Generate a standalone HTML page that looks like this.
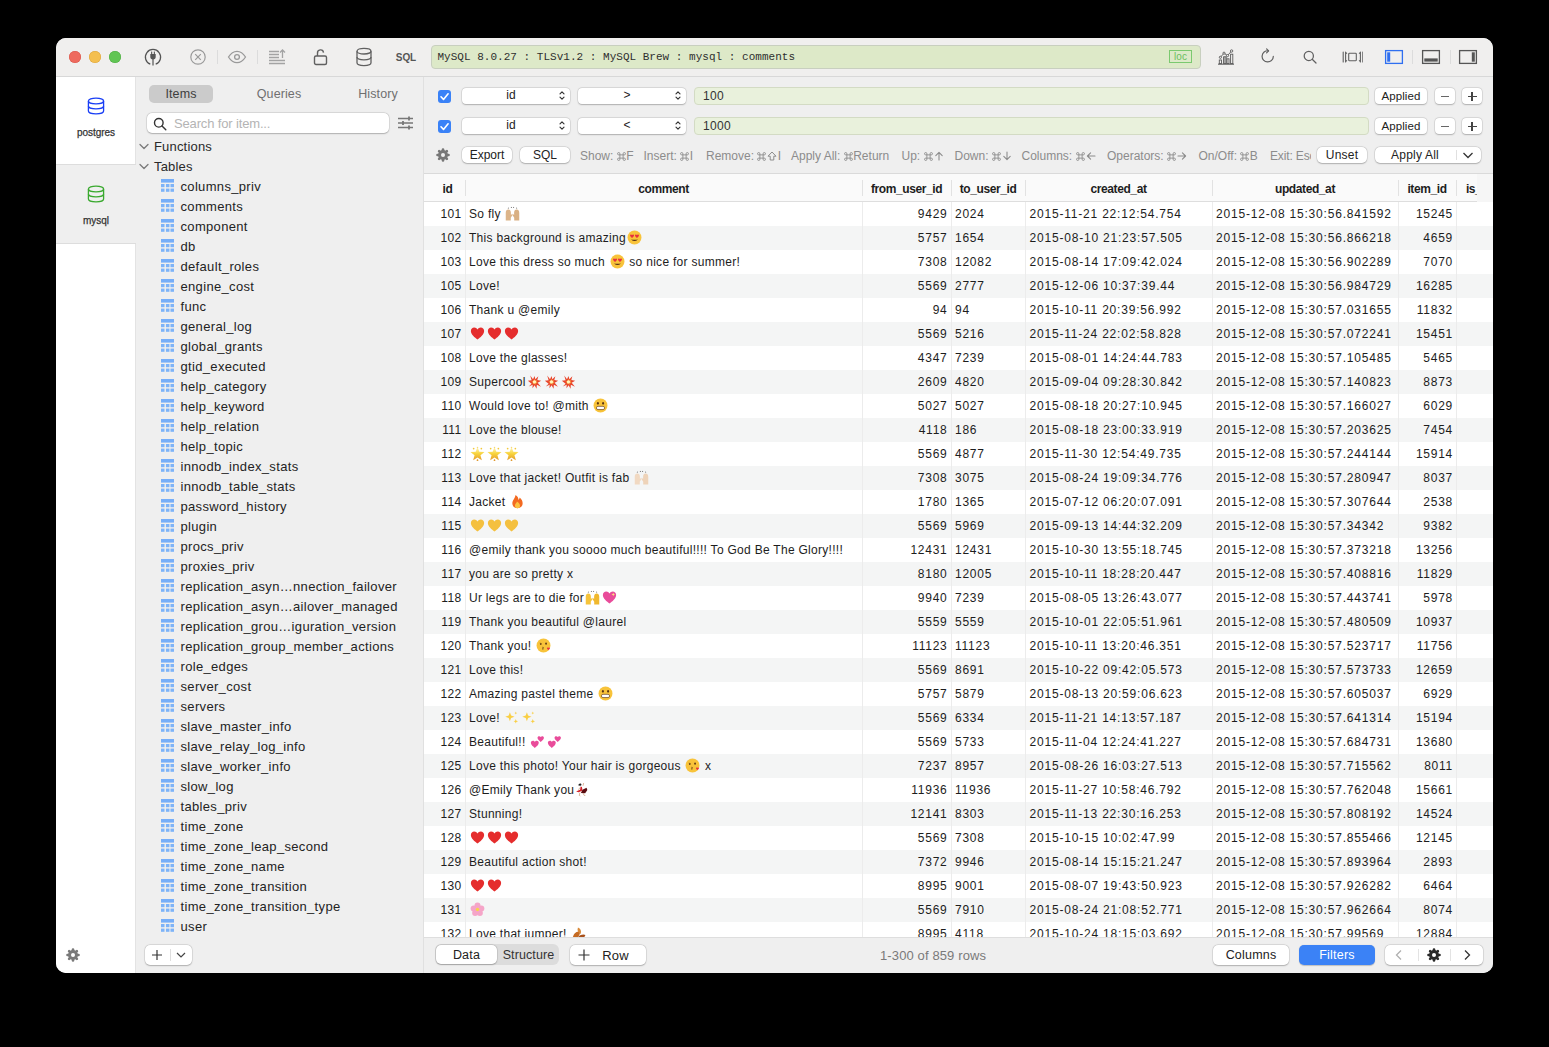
<!DOCTYPE html><html><head><meta charset="utf-8"><style>
html,body{margin:0;padding:0;background:#000;}
body{width:1549px;height:1047px;overflow:hidden;position:relative;font-family:"Liberation Sans",sans-serif;}
#win{position:absolute;left:0;top:0;width:1549px;height:1047px;clip-path:inset(38px 56px 74px 56px round 10px);}
.t{position:absolute;white-space:nowrap;line-height:1;font-family:"Liberation Sans",sans-serif;}
.r{position:absolute;box-sizing:border-box;}
.btn{position:absolute;box-sizing:border-box;background:#fff;border-radius:5px;box-shadow:0 0 0 0.5px rgba(0,0,0,0.12),0 0.5px 1.5px rgba(0,0,0,0.22);}
.row{position:absolute;left:424px;width:1069px;height:24px;}
.cell{position:absolute;white-space:nowrap;line-height:1;font-size:12px;color:#1d1d1d;top:5.9px;}
.em{display:inline-block;position:relative;width:15px;height:0;}
.em svg{position:absolute;left:0;bottom:-3.5px;width:15px;height:15px;}
</style></head><body><div id="win">
<div class="r" style="left:56px;top:38px;width:1437px;height:935px;background:#ffffff;"></div><div class="r" style="left:56px;top:38px;width:1437px;height:38px;background:#f0efee;"></div><div class="r" style="left:56px;top:76px;width:1437px;height:1px;background:#d8d8d8;"></div><div class="r" style="left:69px;top:51px;width:12px;height:12px;border-radius:50%;background:#ee6a5e;box-shadow:inset 0 0 0 0.5px #d9574c"></div><div class="r" style="left:89px;top:51px;width:12px;height:12px;border-radius:50%;background:#f4bf4f;box-shadow:inset 0 0 0 0.5px #dca43d"></div><div class="r" style="left:109px;top:51px;width:12px;height:12px;border-radius:50%;background:#61c554;box-shadow:inset 0 0 0 0.5px #50ab43"></div><div class="r" style="left:56px;top:77px;width:79px;height:896px;background:#ffffff;"></div><div class="r" style="left:135px;top:77px;width:1px;height:896px;background:#e3e3e3;"></div><div class="r" style="left:56px;top:164px;width:80px;height:80px;background:#efefef;border-top:1px solid #dddddd;border-bottom:1px solid #dddddd;"></div><svg class="r" style="left:87px;top:97px;" width="18" height="18" viewBox="0 0 18 18"><g fill="none" stroke="#1a3ff5" stroke-width="1.3"><ellipse cx="9" cy="4" rx="7.6" ry="2.9"/><path d="M1.4 4V14c0 1.6 3.4 2.9 7.6 2.9s7.6-1.3 7.6-2.9V4"/><path d="M1.4 9c0 1.6 3.4 2.9 7.6 2.9s7.6-1.3 7.6-2.9"/></g></svg><div class="t" style="top:127.53px;font-size:10px;color:#333;letter-spacing:-0.05px;left:-304.00px;width:800px;text-align:center;-webkit-text-stroke:0.25px #333;">postgres</div><svg class="r" style="left:87px;top:185px;" width="18" height="18" viewBox="0 0 18 18"><g fill="none" stroke="#3aa92f" stroke-width="1.3"><ellipse cx="9" cy="4" rx="7.6" ry="2.9"/><path d="M1.4 4V14c0 1.6 3.4 2.9 7.6 2.9s7.6-1.3 7.6-2.9V4"/><path d="M1.4 9c0 1.6 3.4 2.9 7.6 2.9s7.6-1.3 7.6-2.9"/></g></svg><div class="t" style="top:215.53px;font-size:10px;color:#333;letter-spacing:-0.05px;left:-304.00px;width:800px;text-align:center;-webkit-text-stroke:0.25px #333;">mysql</div><svg class="r" style="left:65px;top:947px;" width="16" height="16" viewBox="0 0 16 16"><g stroke="#7a7a7a" stroke-width="2.6" stroke-linecap="round"><path d="M8 8L13.50 8.00"/><path d="M8 8L11.89 11.89"/><path d="M8 8L8.00 13.50"/><path d="M8 8L4.11 11.89"/><path d="M8 8L2.50 8.00"/><path d="M8 8L4.11 4.11"/><path d="M8 8L8.00 2.50"/><path d="M8 8L11.89 4.11"/></g><circle cx="8" cy="8" r="4.9" fill="#7a7a7a"/><circle cx="8" cy="8" r="2" fill="#ffffff"/></svg><div class="r" style="left:136px;top:77px;width:287px;height:896px;background:#efefef;"></div><div class="r" style="left:423px;top:77px;width:1px;height:896px;background:#e0e0e0;"></div><div class="r" style="left:149px;top:85px;width:64px;height:18px;background:#cbcbcb;border-radius:5px;"></div><div class="t" style="top:87.62px;font-size:12.5px;color:#3d3d3d;letter-spacing:0.1px;left:-219.00px;width:800px;text-align:center;">Items</div><div class="t" style="top:87.62px;font-size:12.5px;color:#6f6f6f;letter-spacing:0.1px;left:-121.00px;width:800px;text-align:center;">Queries</div><div class="t" style="top:87.62px;font-size:12.5px;color:#6f6f6f;letter-spacing:0.1px;left:-22.00px;width:800px;text-align:center;">History</div><div class="btn" style="left:147px;top:113px;width:242px;height:20px;border-radius:5px"></div><svg class="r" style="left:153px;top:117px;" width="14" height="14" viewBox="0 0 14 14"><g fill="none" stroke="#333" stroke-width="1.4"><circle cx="5.8" cy="5.8" r="4.3"/><path d="M9 9l3.8 3.8" stroke-linecap="round"/></g></svg><div class="t" style="top:117.00px;font-size:13px;color:#b4b4b4;letter-spacing:-0.15px;left:174.00px;">Search for item...</div><svg class="r" style="left:397px;top:115px;" width="17" height="16" viewBox="0 0 17 16"><g stroke="#777" stroke-width="1.5" fill="none"><path d="M1 3.5h15M1 8h15M1 12.5h15"/><path d="M12 1.5v4M6 6v4M12 10.5v4" stroke-width="1.8"/></g></svg><svg class="r" style="left:139px;top:142px;" width="10" height="9" viewBox="0 0 10 9"><path d="M1 2.5l4 4 4-4" fill="none" stroke="#7a7a7a" stroke-width="1.3" stroke-linecap="round" stroke-linejoin="round"/></svg><div class="t" style="top:139.60px;font-size:13px;color:#2a2a2a;letter-spacing:0.18px;left:154.00px;">Functions</div><svg class="r" style="left:139px;top:162px;" width="10" height="9" viewBox="0 0 10 9"><path d="M1 2.5l4 4 4-4" fill="none" stroke="#7a7a7a" stroke-width="1.3" stroke-linecap="round" stroke-linejoin="round"/></svg><div class="t" style="top:159.60px;font-size:13px;color:#2a2a2a;letter-spacing:0.18px;left:154.00px;">Tables</div><svg class="r" style="left:161px;top:179px;" width="13" height="13" viewBox="0 0 13 13"><rect x="0" y="0" width="13" height="3.6" fill="#76aef8"/><rect x="0" y="5" width="3.5" height="3.2" fill="#7db3f8"/><rect x="4.95" y="5" width="3.5" height="3.2" fill="#7db3f8"/><rect x="9.5" y="5" width="3.5" height="3.2" fill="#7db3f8"/><rect x="0" y="9.6" width="3.5" height="3.2" fill="#7db3f8"/><rect x="4.95" y="9.6" width="3.5" height="3.2" fill="#7db3f8"/><rect x="9.5" y="9.6" width="3.5" height="3.2" fill="#7db3f8"/></svg><div class="t" style="top:180.00px;font-size:13px;color:#232323;letter-spacing:0.33px;left:180.50px;">columns_priv</div><svg class="r" style="left:161px;top:199px;" width="13" height="13" viewBox="0 0 13 13"><rect x="0" y="0" width="13" height="3.6" fill="#76aef8"/><rect x="0" y="5" width="3.5" height="3.2" fill="#7db3f8"/><rect x="4.95" y="5" width="3.5" height="3.2" fill="#7db3f8"/><rect x="9.5" y="5" width="3.5" height="3.2" fill="#7db3f8"/><rect x="0" y="9.6" width="3.5" height="3.2" fill="#7db3f8"/><rect x="4.95" y="9.6" width="3.5" height="3.2" fill="#7db3f8"/><rect x="9.5" y="9.6" width="3.5" height="3.2" fill="#7db3f8"/></svg><div class="t" style="top:200.00px;font-size:13px;color:#232323;letter-spacing:0.33px;left:180.50px;">comments</div><svg class="r" style="left:161px;top:219px;" width="13" height="13" viewBox="0 0 13 13"><rect x="0" y="0" width="13" height="3.6" fill="#76aef8"/><rect x="0" y="5" width="3.5" height="3.2" fill="#7db3f8"/><rect x="4.95" y="5" width="3.5" height="3.2" fill="#7db3f8"/><rect x="9.5" y="5" width="3.5" height="3.2" fill="#7db3f8"/><rect x="0" y="9.6" width="3.5" height="3.2" fill="#7db3f8"/><rect x="4.95" y="9.6" width="3.5" height="3.2" fill="#7db3f8"/><rect x="9.5" y="9.6" width="3.5" height="3.2" fill="#7db3f8"/></svg><div class="t" style="top:220.00px;font-size:13px;color:#232323;letter-spacing:0.33px;left:180.50px;">component</div><svg class="r" style="left:161px;top:239px;" width="13" height="13" viewBox="0 0 13 13"><rect x="0" y="0" width="13" height="3.6" fill="#76aef8"/><rect x="0" y="5" width="3.5" height="3.2" fill="#7db3f8"/><rect x="4.95" y="5" width="3.5" height="3.2" fill="#7db3f8"/><rect x="9.5" y="5" width="3.5" height="3.2" fill="#7db3f8"/><rect x="0" y="9.6" width="3.5" height="3.2" fill="#7db3f8"/><rect x="4.95" y="9.6" width="3.5" height="3.2" fill="#7db3f8"/><rect x="9.5" y="9.6" width="3.5" height="3.2" fill="#7db3f8"/></svg><div class="t" style="top:240.00px;font-size:13px;color:#232323;letter-spacing:0.33px;left:180.50px;">db</div><svg class="r" style="left:161px;top:259px;" width="13" height="13" viewBox="0 0 13 13"><rect x="0" y="0" width="13" height="3.6" fill="#76aef8"/><rect x="0" y="5" width="3.5" height="3.2" fill="#7db3f8"/><rect x="4.95" y="5" width="3.5" height="3.2" fill="#7db3f8"/><rect x="9.5" y="5" width="3.5" height="3.2" fill="#7db3f8"/><rect x="0" y="9.6" width="3.5" height="3.2" fill="#7db3f8"/><rect x="4.95" y="9.6" width="3.5" height="3.2" fill="#7db3f8"/><rect x="9.5" y="9.6" width="3.5" height="3.2" fill="#7db3f8"/></svg><div class="t" style="top:260.00px;font-size:13px;color:#232323;letter-spacing:0.33px;left:180.50px;">default_roles</div><svg class="r" style="left:161px;top:279px;" width="13" height="13" viewBox="0 0 13 13"><rect x="0" y="0" width="13" height="3.6" fill="#76aef8"/><rect x="0" y="5" width="3.5" height="3.2" fill="#7db3f8"/><rect x="4.95" y="5" width="3.5" height="3.2" fill="#7db3f8"/><rect x="9.5" y="5" width="3.5" height="3.2" fill="#7db3f8"/><rect x="0" y="9.6" width="3.5" height="3.2" fill="#7db3f8"/><rect x="4.95" y="9.6" width="3.5" height="3.2" fill="#7db3f8"/><rect x="9.5" y="9.6" width="3.5" height="3.2" fill="#7db3f8"/></svg><div class="t" style="top:280.00px;font-size:13px;color:#232323;letter-spacing:0.33px;left:180.50px;">engine_cost</div><svg class="r" style="left:161px;top:299px;" width="13" height="13" viewBox="0 0 13 13"><rect x="0" y="0" width="13" height="3.6" fill="#76aef8"/><rect x="0" y="5" width="3.5" height="3.2" fill="#7db3f8"/><rect x="4.95" y="5" width="3.5" height="3.2" fill="#7db3f8"/><rect x="9.5" y="5" width="3.5" height="3.2" fill="#7db3f8"/><rect x="0" y="9.6" width="3.5" height="3.2" fill="#7db3f8"/><rect x="4.95" y="9.6" width="3.5" height="3.2" fill="#7db3f8"/><rect x="9.5" y="9.6" width="3.5" height="3.2" fill="#7db3f8"/></svg><div class="t" style="top:300.00px;font-size:13px;color:#232323;letter-spacing:0.33px;left:180.50px;">func</div><svg class="r" style="left:161px;top:319px;" width="13" height="13" viewBox="0 0 13 13"><rect x="0" y="0" width="13" height="3.6" fill="#76aef8"/><rect x="0" y="5" width="3.5" height="3.2" fill="#7db3f8"/><rect x="4.95" y="5" width="3.5" height="3.2" fill="#7db3f8"/><rect x="9.5" y="5" width="3.5" height="3.2" fill="#7db3f8"/><rect x="0" y="9.6" width="3.5" height="3.2" fill="#7db3f8"/><rect x="4.95" y="9.6" width="3.5" height="3.2" fill="#7db3f8"/><rect x="9.5" y="9.6" width="3.5" height="3.2" fill="#7db3f8"/></svg><div class="t" style="top:320.00px;font-size:13px;color:#232323;letter-spacing:0.33px;left:180.50px;">general_log</div><svg class="r" style="left:161px;top:339px;" width="13" height="13" viewBox="0 0 13 13"><rect x="0" y="0" width="13" height="3.6" fill="#76aef8"/><rect x="0" y="5" width="3.5" height="3.2" fill="#7db3f8"/><rect x="4.95" y="5" width="3.5" height="3.2" fill="#7db3f8"/><rect x="9.5" y="5" width="3.5" height="3.2" fill="#7db3f8"/><rect x="0" y="9.6" width="3.5" height="3.2" fill="#7db3f8"/><rect x="4.95" y="9.6" width="3.5" height="3.2" fill="#7db3f8"/><rect x="9.5" y="9.6" width="3.5" height="3.2" fill="#7db3f8"/></svg><div class="t" style="top:340.00px;font-size:13px;color:#232323;letter-spacing:0.33px;left:180.50px;">global_grants</div><svg class="r" style="left:161px;top:359px;" width="13" height="13" viewBox="0 0 13 13"><rect x="0" y="0" width="13" height="3.6" fill="#76aef8"/><rect x="0" y="5" width="3.5" height="3.2" fill="#7db3f8"/><rect x="4.95" y="5" width="3.5" height="3.2" fill="#7db3f8"/><rect x="9.5" y="5" width="3.5" height="3.2" fill="#7db3f8"/><rect x="0" y="9.6" width="3.5" height="3.2" fill="#7db3f8"/><rect x="4.95" y="9.6" width="3.5" height="3.2" fill="#7db3f8"/><rect x="9.5" y="9.6" width="3.5" height="3.2" fill="#7db3f8"/></svg><div class="t" style="top:360.00px;font-size:13px;color:#232323;letter-spacing:0.33px;left:180.50px;">gtid_executed</div><svg class="r" style="left:161px;top:379px;" width="13" height="13" viewBox="0 0 13 13"><rect x="0" y="0" width="13" height="3.6" fill="#76aef8"/><rect x="0" y="5" width="3.5" height="3.2" fill="#7db3f8"/><rect x="4.95" y="5" width="3.5" height="3.2" fill="#7db3f8"/><rect x="9.5" y="5" width="3.5" height="3.2" fill="#7db3f8"/><rect x="0" y="9.6" width="3.5" height="3.2" fill="#7db3f8"/><rect x="4.95" y="9.6" width="3.5" height="3.2" fill="#7db3f8"/><rect x="9.5" y="9.6" width="3.5" height="3.2" fill="#7db3f8"/></svg><div class="t" style="top:380.00px;font-size:13px;color:#232323;letter-spacing:0.33px;left:180.50px;">help_category</div><svg class="r" style="left:161px;top:399px;" width="13" height="13" viewBox="0 0 13 13"><rect x="0" y="0" width="13" height="3.6" fill="#76aef8"/><rect x="0" y="5" width="3.5" height="3.2" fill="#7db3f8"/><rect x="4.95" y="5" width="3.5" height="3.2" fill="#7db3f8"/><rect x="9.5" y="5" width="3.5" height="3.2" fill="#7db3f8"/><rect x="0" y="9.6" width="3.5" height="3.2" fill="#7db3f8"/><rect x="4.95" y="9.6" width="3.5" height="3.2" fill="#7db3f8"/><rect x="9.5" y="9.6" width="3.5" height="3.2" fill="#7db3f8"/></svg><div class="t" style="top:400.00px;font-size:13px;color:#232323;letter-spacing:0.33px;left:180.50px;">help_keyword</div><svg class="r" style="left:161px;top:419px;" width="13" height="13" viewBox="0 0 13 13"><rect x="0" y="0" width="13" height="3.6" fill="#76aef8"/><rect x="0" y="5" width="3.5" height="3.2" fill="#7db3f8"/><rect x="4.95" y="5" width="3.5" height="3.2" fill="#7db3f8"/><rect x="9.5" y="5" width="3.5" height="3.2" fill="#7db3f8"/><rect x="0" y="9.6" width="3.5" height="3.2" fill="#7db3f8"/><rect x="4.95" y="9.6" width="3.5" height="3.2" fill="#7db3f8"/><rect x="9.5" y="9.6" width="3.5" height="3.2" fill="#7db3f8"/></svg><div class="t" style="top:420.00px;font-size:13px;color:#232323;letter-spacing:0.33px;left:180.50px;">help_relation</div><svg class="r" style="left:161px;top:439px;" width="13" height="13" viewBox="0 0 13 13"><rect x="0" y="0" width="13" height="3.6" fill="#76aef8"/><rect x="0" y="5" width="3.5" height="3.2" fill="#7db3f8"/><rect x="4.95" y="5" width="3.5" height="3.2" fill="#7db3f8"/><rect x="9.5" y="5" width="3.5" height="3.2" fill="#7db3f8"/><rect x="0" y="9.6" width="3.5" height="3.2" fill="#7db3f8"/><rect x="4.95" y="9.6" width="3.5" height="3.2" fill="#7db3f8"/><rect x="9.5" y="9.6" width="3.5" height="3.2" fill="#7db3f8"/></svg><div class="t" style="top:440.00px;font-size:13px;color:#232323;letter-spacing:0.33px;left:180.50px;">help_topic</div><svg class="r" style="left:161px;top:459px;" width="13" height="13" viewBox="0 0 13 13"><rect x="0" y="0" width="13" height="3.6" fill="#76aef8"/><rect x="0" y="5" width="3.5" height="3.2" fill="#7db3f8"/><rect x="4.95" y="5" width="3.5" height="3.2" fill="#7db3f8"/><rect x="9.5" y="5" width="3.5" height="3.2" fill="#7db3f8"/><rect x="0" y="9.6" width="3.5" height="3.2" fill="#7db3f8"/><rect x="4.95" y="9.6" width="3.5" height="3.2" fill="#7db3f8"/><rect x="9.5" y="9.6" width="3.5" height="3.2" fill="#7db3f8"/></svg><div class="t" style="top:460.00px;font-size:13px;color:#232323;letter-spacing:0.33px;left:180.50px;">innodb_index_stats</div><svg class="r" style="left:161px;top:479px;" width="13" height="13" viewBox="0 0 13 13"><rect x="0" y="0" width="13" height="3.6" fill="#76aef8"/><rect x="0" y="5" width="3.5" height="3.2" fill="#7db3f8"/><rect x="4.95" y="5" width="3.5" height="3.2" fill="#7db3f8"/><rect x="9.5" y="5" width="3.5" height="3.2" fill="#7db3f8"/><rect x="0" y="9.6" width="3.5" height="3.2" fill="#7db3f8"/><rect x="4.95" y="9.6" width="3.5" height="3.2" fill="#7db3f8"/><rect x="9.5" y="9.6" width="3.5" height="3.2" fill="#7db3f8"/></svg><div class="t" style="top:480.00px;font-size:13px;color:#232323;letter-spacing:0.33px;left:180.50px;">innodb_table_stats</div><svg class="r" style="left:161px;top:499px;" width="13" height="13" viewBox="0 0 13 13"><rect x="0" y="0" width="13" height="3.6" fill="#76aef8"/><rect x="0" y="5" width="3.5" height="3.2" fill="#7db3f8"/><rect x="4.95" y="5" width="3.5" height="3.2" fill="#7db3f8"/><rect x="9.5" y="5" width="3.5" height="3.2" fill="#7db3f8"/><rect x="0" y="9.6" width="3.5" height="3.2" fill="#7db3f8"/><rect x="4.95" y="9.6" width="3.5" height="3.2" fill="#7db3f8"/><rect x="9.5" y="9.6" width="3.5" height="3.2" fill="#7db3f8"/></svg><div class="t" style="top:500.00px;font-size:13px;color:#232323;letter-spacing:0.33px;left:180.50px;">password_history</div><svg class="r" style="left:161px;top:519px;" width="13" height="13" viewBox="0 0 13 13"><rect x="0" y="0" width="13" height="3.6" fill="#76aef8"/><rect x="0" y="5" width="3.5" height="3.2" fill="#7db3f8"/><rect x="4.95" y="5" width="3.5" height="3.2" fill="#7db3f8"/><rect x="9.5" y="5" width="3.5" height="3.2" fill="#7db3f8"/><rect x="0" y="9.6" width="3.5" height="3.2" fill="#7db3f8"/><rect x="4.95" y="9.6" width="3.5" height="3.2" fill="#7db3f8"/><rect x="9.5" y="9.6" width="3.5" height="3.2" fill="#7db3f8"/></svg><div class="t" style="top:520.00px;font-size:13px;color:#232323;letter-spacing:0.33px;left:180.50px;">plugin</div><svg class="r" style="left:161px;top:539px;" width="13" height="13" viewBox="0 0 13 13"><rect x="0" y="0" width="13" height="3.6" fill="#76aef8"/><rect x="0" y="5" width="3.5" height="3.2" fill="#7db3f8"/><rect x="4.95" y="5" width="3.5" height="3.2" fill="#7db3f8"/><rect x="9.5" y="5" width="3.5" height="3.2" fill="#7db3f8"/><rect x="0" y="9.6" width="3.5" height="3.2" fill="#7db3f8"/><rect x="4.95" y="9.6" width="3.5" height="3.2" fill="#7db3f8"/><rect x="9.5" y="9.6" width="3.5" height="3.2" fill="#7db3f8"/></svg><div class="t" style="top:540.00px;font-size:13px;color:#232323;letter-spacing:0.33px;left:180.50px;">procs_priv</div><svg class="r" style="left:161px;top:559px;" width="13" height="13" viewBox="0 0 13 13"><rect x="0" y="0" width="13" height="3.6" fill="#76aef8"/><rect x="0" y="5" width="3.5" height="3.2" fill="#7db3f8"/><rect x="4.95" y="5" width="3.5" height="3.2" fill="#7db3f8"/><rect x="9.5" y="5" width="3.5" height="3.2" fill="#7db3f8"/><rect x="0" y="9.6" width="3.5" height="3.2" fill="#7db3f8"/><rect x="4.95" y="9.6" width="3.5" height="3.2" fill="#7db3f8"/><rect x="9.5" y="9.6" width="3.5" height="3.2" fill="#7db3f8"/></svg><div class="t" style="top:560.00px;font-size:13px;color:#232323;letter-spacing:0.33px;left:180.50px;">proxies_priv</div><svg class="r" style="left:161px;top:579px;" width="13" height="13" viewBox="0 0 13 13"><rect x="0" y="0" width="13" height="3.6" fill="#76aef8"/><rect x="0" y="5" width="3.5" height="3.2" fill="#7db3f8"/><rect x="4.95" y="5" width="3.5" height="3.2" fill="#7db3f8"/><rect x="9.5" y="5" width="3.5" height="3.2" fill="#7db3f8"/><rect x="0" y="9.6" width="3.5" height="3.2" fill="#7db3f8"/><rect x="4.95" y="9.6" width="3.5" height="3.2" fill="#7db3f8"/><rect x="9.5" y="9.6" width="3.5" height="3.2" fill="#7db3f8"/></svg><div class="t" style="top:580.00px;font-size:13px;color:#232323;letter-spacing:0.33px;left:180.50px;">replication_asyn…nnection_failover</div><svg class="r" style="left:161px;top:599px;" width="13" height="13" viewBox="0 0 13 13"><rect x="0" y="0" width="13" height="3.6" fill="#76aef8"/><rect x="0" y="5" width="3.5" height="3.2" fill="#7db3f8"/><rect x="4.95" y="5" width="3.5" height="3.2" fill="#7db3f8"/><rect x="9.5" y="5" width="3.5" height="3.2" fill="#7db3f8"/><rect x="0" y="9.6" width="3.5" height="3.2" fill="#7db3f8"/><rect x="4.95" y="9.6" width="3.5" height="3.2" fill="#7db3f8"/><rect x="9.5" y="9.6" width="3.5" height="3.2" fill="#7db3f8"/></svg><div class="t" style="top:600.00px;font-size:13px;color:#232323;letter-spacing:0.33px;left:180.50px;">replication_asyn…ailover_managed</div><svg class="r" style="left:161px;top:619px;" width="13" height="13" viewBox="0 0 13 13"><rect x="0" y="0" width="13" height="3.6" fill="#76aef8"/><rect x="0" y="5" width="3.5" height="3.2" fill="#7db3f8"/><rect x="4.95" y="5" width="3.5" height="3.2" fill="#7db3f8"/><rect x="9.5" y="5" width="3.5" height="3.2" fill="#7db3f8"/><rect x="0" y="9.6" width="3.5" height="3.2" fill="#7db3f8"/><rect x="4.95" y="9.6" width="3.5" height="3.2" fill="#7db3f8"/><rect x="9.5" y="9.6" width="3.5" height="3.2" fill="#7db3f8"/></svg><div class="t" style="top:620.00px;font-size:13px;color:#232323;letter-spacing:0.33px;left:180.50px;">replication_grou…iguration_version</div><svg class="r" style="left:161px;top:639px;" width="13" height="13" viewBox="0 0 13 13"><rect x="0" y="0" width="13" height="3.6" fill="#76aef8"/><rect x="0" y="5" width="3.5" height="3.2" fill="#7db3f8"/><rect x="4.95" y="5" width="3.5" height="3.2" fill="#7db3f8"/><rect x="9.5" y="5" width="3.5" height="3.2" fill="#7db3f8"/><rect x="0" y="9.6" width="3.5" height="3.2" fill="#7db3f8"/><rect x="4.95" y="9.6" width="3.5" height="3.2" fill="#7db3f8"/><rect x="9.5" y="9.6" width="3.5" height="3.2" fill="#7db3f8"/></svg><div class="t" style="top:640.00px;font-size:13px;color:#232323;letter-spacing:0.33px;left:180.50px;">replication_group_member_actions</div><svg class="r" style="left:161px;top:659px;" width="13" height="13" viewBox="0 0 13 13"><rect x="0" y="0" width="13" height="3.6" fill="#76aef8"/><rect x="0" y="5" width="3.5" height="3.2" fill="#7db3f8"/><rect x="4.95" y="5" width="3.5" height="3.2" fill="#7db3f8"/><rect x="9.5" y="5" width="3.5" height="3.2" fill="#7db3f8"/><rect x="0" y="9.6" width="3.5" height="3.2" fill="#7db3f8"/><rect x="4.95" y="9.6" width="3.5" height="3.2" fill="#7db3f8"/><rect x="9.5" y="9.6" width="3.5" height="3.2" fill="#7db3f8"/></svg><div class="t" style="top:660.00px;font-size:13px;color:#232323;letter-spacing:0.33px;left:180.50px;">role_edges</div><svg class="r" style="left:161px;top:679px;" width="13" height="13" viewBox="0 0 13 13"><rect x="0" y="0" width="13" height="3.6" fill="#76aef8"/><rect x="0" y="5" width="3.5" height="3.2" fill="#7db3f8"/><rect x="4.95" y="5" width="3.5" height="3.2" fill="#7db3f8"/><rect x="9.5" y="5" width="3.5" height="3.2" fill="#7db3f8"/><rect x="0" y="9.6" width="3.5" height="3.2" fill="#7db3f8"/><rect x="4.95" y="9.6" width="3.5" height="3.2" fill="#7db3f8"/><rect x="9.5" y="9.6" width="3.5" height="3.2" fill="#7db3f8"/></svg><div class="t" style="top:680.00px;font-size:13px;color:#232323;letter-spacing:0.33px;left:180.50px;">server_cost</div><svg class="r" style="left:161px;top:699px;" width="13" height="13" viewBox="0 0 13 13"><rect x="0" y="0" width="13" height="3.6" fill="#76aef8"/><rect x="0" y="5" width="3.5" height="3.2" fill="#7db3f8"/><rect x="4.95" y="5" width="3.5" height="3.2" fill="#7db3f8"/><rect x="9.5" y="5" width="3.5" height="3.2" fill="#7db3f8"/><rect x="0" y="9.6" width="3.5" height="3.2" fill="#7db3f8"/><rect x="4.95" y="9.6" width="3.5" height="3.2" fill="#7db3f8"/><rect x="9.5" y="9.6" width="3.5" height="3.2" fill="#7db3f8"/></svg><div class="t" style="top:700.00px;font-size:13px;color:#232323;letter-spacing:0.33px;left:180.50px;">servers</div><svg class="r" style="left:161px;top:719px;" width="13" height="13" viewBox="0 0 13 13"><rect x="0" y="0" width="13" height="3.6" fill="#76aef8"/><rect x="0" y="5" width="3.5" height="3.2" fill="#7db3f8"/><rect x="4.95" y="5" width="3.5" height="3.2" fill="#7db3f8"/><rect x="9.5" y="5" width="3.5" height="3.2" fill="#7db3f8"/><rect x="0" y="9.6" width="3.5" height="3.2" fill="#7db3f8"/><rect x="4.95" y="9.6" width="3.5" height="3.2" fill="#7db3f8"/><rect x="9.5" y="9.6" width="3.5" height="3.2" fill="#7db3f8"/></svg><div class="t" style="top:720.00px;font-size:13px;color:#232323;letter-spacing:0.33px;left:180.50px;">slave_master_info</div><svg class="r" style="left:161px;top:739px;" width="13" height="13" viewBox="0 0 13 13"><rect x="0" y="0" width="13" height="3.6" fill="#76aef8"/><rect x="0" y="5" width="3.5" height="3.2" fill="#7db3f8"/><rect x="4.95" y="5" width="3.5" height="3.2" fill="#7db3f8"/><rect x="9.5" y="5" width="3.5" height="3.2" fill="#7db3f8"/><rect x="0" y="9.6" width="3.5" height="3.2" fill="#7db3f8"/><rect x="4.95" y="9.6" width="3.5" height="3.2" fill="#7db3f8"/><rect x="9.5" y="9.6" width="3.5" height="3.2" fill="#7db3f8"/></svg><div class="t" style="top:740.00px;font-size:13px;color:#232323;letter-spacing:0.33px;left:180.50px;">slave_relay_log_info</div><svg class="r" style="left:161px;top:759px;" width="13" height="13" viewBox="0 0 13 13"><rect x="0" y="0" width="13" height="3.6" fill="#76aef8"/><rect x="0" y="5" width="3.5" height="3.2" fill="#7db3f8"/><rect x="4.95" y="5" width="3.5" height="3.2" fill="#7db3f8"/><rect x="9.5" y="5" width="3.5" height="3.2" fill="#7db3f8"/><rect x="0" y="9.6" width="3.5" height="3.2" fill="#7db3f8"/><rect x="4.95" y="9.6" width="3.5" height="3.2" fill="#7db3f8"/><rect x="9.5" y="9.6" width="3.5" height="3.2" fill="#7db3f8"/></svg><div class="t" style="top:760.00px;font-size:13px;color:#232323;letter-spacing:0.33px;left:180.50px;">slave_worker_info</div><svg class="r" style="left:161px;top:779px;" width="13" height="13" viewBox="0 0 13 13"><rect x="0" y="0" width="13" height="3.6" fill="#76aef8"/><rect x="0" y="5" width="3.5" height="3.2" fill="#7db3f8"/><rect x="4.95" y="5" width="3.5" height="3.2" fill="#7db3f8"/><rect x="9.5" y="5" width="3.5" height="3.2" fill="#7db3f8"/><rect x="0" y="9.6" width="3.5" height="3.2" fill="#7db3f8"/><rect x="4.95" y="9.6" width="3.5" height="3.2" fill="#7db3f8"/><rect x="9.5" y="9.6" width="3.5" height="3.2" fill="#7db3f8"/></svg><div class="t" style="top:780.00px;font-size:13px;color:#232323;letter-spacing:0.33px;left:180.50px;">slow_log</div><svg class="r" style="left:161px;top:799px;" width="13" height="13" viewBox="0 0 13 13"><rect x="0" y="0" width="13" height="3.6" fill="#76aef8"/><rect x="0" y="5" width="3.5" height="3.2" fill="#7db3f8"/><rect x="4.95" y="5" width="3.5" height="3.2" fill="#7db3f8"/><rect x="9.5" y="5" width="3.5" height="3.2" fill="#7db3f8"/><rect x="0" y="9.6" width="3.5" height="3.2" fill="#7db3f8"/><rect x="4.95" y="9.6" width="3.5" height="3.2" fill="#7db3f8"/><rect x="9.5" y="9.6" width="3.5" height="3.2" fill="#7db3f8"/></svg><div class="t" style="top:800.00px;font-size:13px;color:#232323;letter-spacing:0.33px;left:180.50px;">tables_priv</div><svg class="r" style="left:161px;top:819px;" width="13" height="13" viewBox="0 0 13 13"><rect x="0" y="0" width="13" height="3.6" fill="#76aef8"/><rect x="0" y="5" width="3.5" height="3.2" fill="#7db3f8"/><rect x="4.95" y="5" width="3.5" height="3.2" fill="#7db3f8"/><rect x="9.5" y="5" width="3.5" height="3.2" fill="#7db3f8"/><rect x="0" y="9.6" width="3.5" height="3.2" fill="#7db3f8"/><rect x="4.95" y="9.6" width="3.5" height="3.2" fill="#7db3f8"/><rect x="9.5" y="9.6" width="3.5" height="3.2" fill="#7db3f8"/></svg><div class="t" style="top:820.00px;font-size:13px;color:#232323;letter-spacing:0.33px;left:180.50px;">time_zone</div><svg class="r" style="left:161px;top:839px;" width="13" height="13" viewBox="0 0 13 13"><rect x="0" y="0" width="13" height="3.6" fill="#76aef8"/><rect x="0" y="5" width="3.5" height="3.2" fill="#7db3f8"/><rect x="4.95" y="5" width="3.5" height="3.2" fill="#7db3f8"/><rect x="9.5" y="5" width="3.5" height="3.2" fill="#7db3f8"/><rect x="0" y="9.6" width="3.5" height="3.2" fill="#7db3f8"/><rect x="4.95" y="9.6" width="3.5" height="3.2" fill="#7db3f8"/><rect x="9.5" y="9.6" width="3.5" height="3.2" fill="#7db3f8"/></svg><div class="t" style="top:840.00px;font-size:13px;color:#232323;letter-spacing:0.33px;left:180.50px;">time_zone_leap_second</div><svg class="r" style="left:161px;top:859px;" width="13" height="13" viewBox="0 0 13 13"><rect x="0" y="0" width="13" height="3.6" fill="#76aef8"/><rect x="0" y="5" width="3.5" height="3.2" fill="#7db3f8"/><rect x="4.95" y="5" width="3.5" height="3.2" fill="#7db3f8"/><rect x="9.5" y="5" width="3.5" height="3.2" fill="#7db3f8"/><rect x="0" y="9.6" width="3.5" height="3.2" fill="#7db3f8"/><rect x="4.95" y="9.6" width="3.5" height="3.2" fill="#7db3f8"/><rect x="9.5" y="9.6" width="3.5" height="3.2" fill="#7db3f8"/></svg><div class="t" style="top:860.00px;font-size:13px;color:#232323;letter-spacing:0.33px;left:180.50px;">time_zone_name</div><svg class="r" style="left:161px;top:879px;" width="13" height="13" viewBox="0 0 13 13"><rect x="0" y="0" width="13" height="3.6" fill="#76aef8"/><rect x="0" y="5" width="3.5" height="3.2" fill="#7db3f8"/><rect x="4.95" y="5" width="3.5" height="3.2" fill="#7db3f8"/><rect x="9.5" y="5" width="3.5" height="3.2" fill="#7db3f8"/><rect x="0" y="9.6" width="3.5" height="3.2" fill="#7db3f8"/><rect x="4.95" y="9.6" width="3.5" height="3.2" fill="#7db3f8"/><rect x="9.5" y="9.6" width="3.5" height="3.2" fill="#7db3f8"/></svg><div class="t" style="top:880.00px;font-size:13px;color:#232323;letter-spacing:0.33px;left:180.50px;">time_zone_transition</div><svg class="r" style="left:161px;top:899px;" width="13" height="13" viewBox="0 0 13 13"><rect x="0" y="0" width="13" height="3.6" fill="#76aef8"/><rect x="0" y="5" width="3.5" height="3.2" fill="#7db3f8"/><rect x="4.95" y="5" width="3.5" height="3.2" fill="#7db3f8"/><rect x="9.5" y="5" width="3.5" height="3.2" fill="#7db3f8"/><rect x="0" y="9.6" width="3.5" height="3.2" fill="#7db3f8"/><rect x="4.95" y="9.6" width="3.5" height="3.2" fill="#7db3f8"/><rect x="9.5" y="9.6" width="3.5" height="3.2" fill="#7db3f8"/></svg><div class="t" style="top:900.00px;font-size:13px;color:#232323;letter-spacing:0.33px;left:180.50px;">time_zone_transition_type</div><svg class="r" style="left:161px;top:919px;" width="13" height="13" viewBox="0 0 13 13"><rect x="0" y="0" width="13" height="3.6" fill="#76aef8"/><rect x="0" y="5" width="3.5" height="3.2" fill="#7db3f8"/><rect x="4.95" y="5" width="3.5" height="3.2" fill="#7db3f8"/><rect x="9.5" y="5" width="3.5" height="3.2" fill="#7db3f8"/><rect x="0" y="9.6" width="3.5" height="3.2" fill="#7db3f8"/><rect x="4.95" y="9.6" width="3.5" height="3.2" fill="#7db3f8"/><rect x="9.5" y="9.6" width="3.5" height="3.2" fill="#7db3f8"/></svg><div class="t" style="top:920.00px;font-size:13px;color:#232323;letter-spacing:0.33px;left:180.50px;">user</div><div class="btn" style="left:145px;top:945px;width:47px;height:20px;border-radius:5px"></div><svg class="r" style="left:150px;top:948px;" width="14" height="14" viewBox="0 0 14 14"><path d="M7 2v10M2 7h10" stroke="#333" stroke-width="1.2"/></svg><div class="r" style="left:170px;top:949px;width:1px;height:12px;background:#dedede;"></div><svg class="r" style="left:175px;top:950px;" width="12" height="10" viewBox="0 0 12 10"><path d="M2 3l4 4 4-4" fill="none" stroke="#444" stroke-width="1.2"/></svg><svg class="r" style="left:143px;top:47px;" width="20" height="20" viewBox="0 0 20 20"><g fill="none" stroke="#555" stroke-width="1.25"><path d="M7.3 17.2A7.6 7.6 0 1 1 12.7 17.2"/></g><g fill="#555"><path d="M7.3 7h5.4v2.8a2.7 2.7 0 0 1-5.4 0z"/><rect x="8.1" y="4.6" width="1.1" height="2.8"/><rect x="10.8" y="4.6" width="1.1" height="2.8"/><rect x="9.4" y="11.5" width="1.2" height="7"/></g></svg><svg class="r" style="left:189px;top:48px;" width="18" height="18" viewBox="0 0 18 18"><g fill="none" stroke="#9a9a9a" stroke-width="1.2"><circle cx="9" cy="9" r="7.2"/><path d="M6.2 6.2l5.6 5.6M11.8 6.2l-5.6 5.6"/></g></svg><div class="r" style="left:217px;top:50px;width:1px;height:14px;background:#dcdcdc;"></div><svg class="r" style="left:227px;top:48px;" width="20" height="18" viewBox="0 0 20 18"><g fill="none" stroke="#9a9a9a" stroke-width="1.3"><path d="M1.5 9C4 5 7 3.3 10 3.3S16 5 18.5 9C16 13 13 14.7 10 14.7S4 13 1.5 9Z"/><circle cx="10" cy="9" r="2.4"/></g></svg><div class="r" style="left:257px;top:50px;width:1px;height:14px;background:#dcdcdc;"></div><svg class="r" style="left:268px;top:48px;" width="18" height="18" viewBox="0 0 18 18"><g stroke="#a3a3a3" stroke-width="1.3" fill="none"><path d="M1 3.5h10M1 6.5h10M1 9.5h10M1 12.5h16M1 15.5h16"/><path d="M14.5 10V2M12 4.5l2.5-2.5 2.5 2.5"/></g></svg><svg class="r" style="left:313px;top:48px;" width="16" height="18" viewBox="0 0 16 18"><g fill="none" stroke="#606060" stroke-width="1.4"><rect x="1.5" y="8" width="12" height="8.5" rx="1.5"/><path d="M4.5 8V5.2a3 3 0 0 1 6 -0.6"/></g></svg><svg class="r" style="left:355px;top:47px;" width="18" height="20" viewBox="0 0 18 20"><g fill="none" stroke="#606060" stroke-width="1.3"><ellipse cx="9" cy="4.2" rx="7" ry="2.8"/><path d="M2 4.2v11.6c0 1.6 3.1 2.8 7 2.8s7-1.2 7-2.8V4.2"/><path d="M2 10c0 1.6 3.1 2.8 7 2.8s7-1.2 7-2.8"/></g></svg><div class="t" style="top:52.53px;font-size:10px;color:#555;font-weight:700;letter-spacing:-0.1px;left:6.00px;width:800px;text-align:center;">SQL</div><div class="r" style="left:431px;top:45px;width:770px;height:24px;background:#dde9c8;border:1px solid #c8cfbf;border-radius:4px"></div><div class="t" style="top:52.39px;font-size:11px;color:#2e2e2e;letter-spacing:0.02px;font-family:'Liberation Mono',monospace;left:437.50px;">MySQL 8.0.27 : TLSv1.2 : MySQL Brew : mysql : comments</div><div class="r" style="left:1169px;top:50px;width:23px;height:13px;border:1px solid #7bc96f;"></div><div class="t" style="top:51.53px;font-size:10px;color:#6cbf5f;left:780.50px;width:800px;text-align:center;">loc</div><svg class="r" style="left:1216px;top:47px;" width="20" height="20" viewBox="0 0 20 20"><g fill="none" stroke="#5a5a5a" stroke-width="0.9"><rect x="3.3" y="13" width="2.2" height="3.6"/><rect x="7.6" y="9.8" width="2.6" height="6.8" fill="#aaa"/><rect x="11" y="11.8" width="2" height="4.8"/><rect x="14.6" y="7.2" width="2.2" height="9.4"/><path d="M4.4 10.3L8 6.2 11.5 8.6 15.6 4"/><circle cx="4.4" cy="10.3" r="1.1" fill="#f0efee"/><circle cx="8" cy="6.2" r="1.1" fill="#f0efee"/><circle cx="11.5" cy="8.6" r="1.1" fill="#f0efee"/><circle cx="15.6" cy="4" r="1.2" fill="#f0efee"/></g><rect x="2" y="16.6" width="16" height="1.1" fill="#5a5a5a"/></svg><svg class="r" style="left:1258px;top:47px;" width="20" height="20" viewBox="0 0 20 20"><g fill="none" stroke="#606060" stroke-width="1.2" stroke-linecap="round" stroke-linejoin="round"><path d="M15.3 9.4A5.6 5.6 0 1 1 10.3 3.8"/><path d="M8.6 1.8L10.6 3.8 8.6 5.8"/></g></svg><svg class="r" style="left:1300px;top:47px;" width="20" height="20" viewBox="0 0 20 20"><g fill="none" stroke="#606060" stroke-width="1.25"><circle cx="8.8" cy="8.9" r="4.6"/><path d="M12.2 12.3L16 16" stroke-linecap="round"/></g></svg><svg class="r" style="left:1341px;top:48px;" width="22" height="18" viewBox="0 0 22 18"><g fill="none" stroke="#606060" stroke-width="1.1"><path d="M2.2 4v10M4.6 4v10M19.4 4v10M21.8 4v10" stroke-linecap="round"/><rect x="7.7" y="5.2" width="7.6" height="7.6" rx="0.8"/><path d="M4.8 4.8l1.2 0.8M4.8 13.2l1.2-0.8M19.2 4.8l-1.2 0.8M19.2 13.2l-1.2-0.8"/></g></svg><svg class="r" style="left:1384px;top:47px;" width="20" height="20" viewBox="0 0 20 20"><rect x="1.6" y="3.6" width="16.8" height="12.8" fill="none" stroke="#2f6ff0" stroke-width="1.3"/><rect x="3.2" y="5.3" width="3" height="9.4" fill="#2f6ff0"/></svg><div class="r" style="left:1412px;top:50px;width:1px;height:14px;background:#dcdcdc;"></div><svg class="r" style="left:1421px;top:47px;" width="20" height="20" viewBox="0 0 20 20"><rect x="1.6" y="3.6" width="16.8" height="12.8" fill="none" stroke="#555" stroke-width="1.3"/><rect x="3.3" y="11.4" width="13.4" height="3.2" fill="#555"/></svg><div class="r" style="left:1450px;top:50px;width:1px;height:14px;background:#dcdcdc;"></div><svg class="r" style="left:1458px;top:47px;" width="20" height="20" viewBox="0 0 20 20"><rect x="1.6" y="3.6" width="16.8" height="12.8" fill="none" stroke="#555" stroke-width="1.3"/><rect x="13.8" y="5.3" width="3" height="9.4" fill="#555"/></svg><div class="r" style="left:424px;top:77px;width:1069px;height:96px;background:#efefef;"></div><div class="r" style="left:424px;top:173px;width:1069px;height:1px;background:#dadada;"></div><svg class="r" style="left:438px;top:90px;" width="13" height="13" viewBox="0 0 13 13"><rect x="0" y="0" width="13" height="13" rx="3" fill="#3a82f7"/><path d="M3 6.8l2.5 2.6 4.6-5.6" fill="none" stroke="#fff" stroke-width="1.6" stroke-linecap="round" stroke-linejoin="round"/></svg><div class="btn" style="left:462px;top:88px;width:108px;height:15.5px;border-radius:4px"></div><div class="t" style="top:89.04px;font-size:12px;color:#222;left:111.00px;width:800px;text-align:center;">id</div><svg class="r" style="left:557.5px;top:90.2px;" width="8" height="11" viewBox="0 0 8 11"><path d="M2 3.8L4 1.8 6 3.8M2 7.2L4 9.2 6 7.2" fill="none" stroke="#333" stroke-width="1.15" stroke-linecap="round" stroke-linejoin="round"/></svg><div class="btn" style="left:578px;top:88px;width:108px;height:15.5px;border-radius:4px"></div><div class="t" style="top:89.04px;font-size:12px;color:#222;left:227.00px;width:800px;text-align:center;">&gt;</div><svg class="r" style="left:673.5px;top:90.2px;" width="8" height="11" viewBox="0 0 8 11"><path d="M2 3.8L4 1.8 6 3.8M2 7.2L4 9.2 6 7.2" fill="none" stroke="#333" stroke-width="1.15" stroke-linecap="round" stroke-linejoin="round"/></svg><div class="r" style="left:694px;top:87px;width:675px;height:18px;background:#e9f1dc;border:1px solid #d3dbc4;border-radius:4px"></div><div class="t" style="top:89.84px;font-size:12px;color:#333;letter-spacing:0.3px;left:703.00px;">100</div><div class="btn" style="left:1375px;top:88px;width:52px;height:16px;border-radius:4px"></div><div class="t" style="top:90.87px;font-size:11.5px;color:#222;letter-spacing:0.1px;left:1001.00px;width:800px;text-align:center;">Applied</div><div class="btn" style="left:1435px;top:88px;width:20px;height:16px;border-radius:4px"></div><div class="r" style="left:1441px;top:96px;width:8px;height:1.2px;background:#666;"></div><div class="btn" style="left:1462px;top:88px;width:20px;height:16px;border-radius:4px"></div><div class="r" style="left:1467.5px;top:95.5px;width:9px;height:1.2px;background:#444;"></div><div class="r" style="left:1471.4px;top:91.6px;width:1.2px;height:9px;background:#444;"></div><svg class="r" style="left:438px;top:120px;" width="13" height="13" viewBox="0 0 13 13"><rect x="0" y="0" width="13" height="13" rx="3" fill="#3a82f7"/><path d="M3 6.8l2.5 2.6 4.6-5.6" fill="none" stroke="#fff" stroke-width="1.6" stroke-linecap="round" stroke-linejoin="round"/></svg><div class="btn" style="left:462px;top:118px;width:108px;height:15.5px;border-radius:4px"></div><div class="t" style="top:119.04px;font-size:12px;color:#222;left:111.00px;width:800px;text-align:center;">id</div><svg class="r" style="left:557.5px;top:120.2px;" width="8" height="11" viewBox="0 0 8 11"><path d="M2 3.8L4 1.8 6 3.8M2 7.2L4 9.2 6 7.2" fill="none" stroke="#333" stroke-width="1.15" stroke-linecap="round" stroke-linejoin="round"/></svg><div class="btn" style="left:578px;top:118px;width:108px;height:15.5px;border-radius:4px"></div><div class="t" style="top:119.04px;font-size:12px;color:#222;left:227.00px;width:800px;text-align:center;">&lt;</div><svg class="r" style="left:673.5px;top:120.2px;" width="8" height="11" viewBox="0 0 8 11"><path d="M2 3.8L4 1.8 6 3.8M2 7.2L4 9.2 6 7.2" fill="none" stroke="#333" stroke-width="1.15" stroke-linecap="round" stroke-linejoin="round"/></svg><div class="r" style="left:694px;top:117px;width:675px;height:18px;background:#e9f1dc;border:1px solid #d3dbc4;border-radius:4px"></div><div class="t" style="top:119.84px;font-size:12px;color:#333;letter-spacing:0.3px;left:703.00px;">1000</div><div class="btn" style="left:1375px;top:118px;width:52px;height:16px;border-radius:4px"></div><div class="t" style="top:120.87px;font-size:11.5px;color:#222;letter-spacing:0.1px;left:1001.00px;width:800px;text-align:center;">Applied</div><div class="btn" style="left:1435px;top:118px;width:20px;height:16px;border-radius:4px"></div><div class="r" style="left:1441px;top:126px;width:8px;height:1.2px;background:#666;"></div><div class="btn" style="left:1462px;top:118px;width:20px;height:16px;border-radius:4px"></div><div class="r" style="left:1467.5px;top:125.5px;width:9px;height:1.2px;background:#444;"></div><div class="r" style="left:1471.4px;top:121.6px;width:1.2px;height:9px;background:#444;"></div><svg class="r" style="left:435px;top:146.5px;" width="16" height="16" viewBox="0 0 16 16"><g stroke="#777777" stroke-width="2.6" stroke-linecap="round"><path d="M8 8L13.50 8.00"/><path d="M8 8L11.89 11.89"/><path d="M8 8L8.00 13.50"/><path d="M8 8L4.11 11.89"/><path d="M8 8L2.50 8.00"/><path d="M8 8L4.11 4.11"/><path d="M8 8L8.00 2.50"/><path d="M8 8L11.89 4.11"/></g><circle cx="8" cy="8" r="4.9" fill="#777777"/><circle cx="8" cy="8" r="2" fill="#efefef"/></svg><div class="btn" style="left:462px;top:147px;width:50px;height:16px;border-radius:5px"></div><div class="t" style="top:149.34px;font-size:12px;color:#222;left:87.00px;width:800px;text-align:center;">Export</div><div class="btn" style="left:520px;top:147px;width:50px;height:16px;border-radius:5px"></div><div class="t" style="top:149.34px;font-size:12px;color:#222;left:145.00px;width:800px;text-align:center;">SQL</div><div class="t" style="top:150.44px;font-size:12px;color:#8c8c8c;left:580.00px;">Show: <svg width="9" height="9" viewBox="0 0 10 10" style="vertical-align:-0.5px;margin:0 0.5px 0 0"><path d="M3.2 3.2V1.9A1.3 1.3 0 1 0 1.9 3.2H8.1A1.3 1.3 0 1 0 6.8 1.9V8.1A1.3 1.3 0 1 0 8.1 6.8H1.9A1.3 1.3 0 1 0 3.2 8.1Z" fill="none" stroke="currentColor" stroke-width="1"/></svg>F</div><div class="t" style="top:150.44px;font-size:12px;color:#8c8c8c;left:643.50px;">Insert: <svg width="9" height="9" viewBox="0 0 10 10" style="vertical-align:-0.5px;margin:0 0.5px 0 0"><path d="M3.2 3.2V1.9A1.3 1.3 0 1 0 1.9 3.2H8.1A1.3 1.3 0 1 0 6.8 1.9V8.1A1.3 1.3 0 1 0 8.1 6.8H1.9A1.3 1.3 0 1 0 3.2 8.1Z" fill="none" stroke="currentColor" stroke-width="1"/></svg>I</div><div class="t" style="top:150.44px;font-size:12px;color:#8c8c8c;left:706.00px;">Remove: <svg width="9" height="9" viewBox="0 0 10 10" style="vertical-align:-0.5px;margin:0 0.5px 0 0"><path d="M3.2 3.2V1.9A1.3 1.3 0 1 0 1.9 3.2H8.1A1.3 1.3 0 1 0 6.8 1.9V8.1A1.3 1.3 0 1 0 8.1 6.8H1.9A1.3 1.3 0 1 0 3.2 8.1Z" fill="none" stroke="currentColor" stroke-width="1"/></svg><svg width="10" height="10" viewBox="0 0 10 10" style="vertical-align:-0.5px;margin:0 0.5px"><path d="M5 1L9 5.2H6.8V9H3.2V5.2H1Z" fill="none" stroke="currentColor" stroke-width="1" stroke-linejoin="round"/></svg>I</div><div class="t" style="top:150.44px;font-size:12px;color:#8c8c8c;left:791.00px;">Apply All: <svg width="9" height="9" viewBox="0 0 10 10" style="vertical-align:-0.5px;margin:0 0.5px 0 0"><path d="M3.2 3.2V1.9A1.3 1.3 0 1 0 1.9 3.2H8.1A1.3 1.3 0 1 0 6.8 1.9V8.1A1.3 1.3 0 1 0 8.1 6.8H1.9A1.3 1.3 0 1 0 3.2 8.1Z" fill="none" stroke="currentColor" stroke-width="1"/></svg>Return</div><div class="t" style="top:150.44px;font-size:12px;color:#8c8c8c;left:901.50px;">Up: <svg width="9" height="9" viewBox="0 0 10 10" style="vertical-align:-0.5px;margin:0 0.5px 0 0"><path d="M3.2 3.2V1.9A1.3 1.3 0 1 0 1.9 3.2H8.1A1.3 1.3 0 1 0 6.8 1.9V8.1A1.3 1.3 0 1 0 8.1 6.8H1.9A1.3 1.3 0 1 0 3.2 8.1Z" fill="none" stroke="currentColor" stroke-width="1"/></svg><svg width="10" height="10" viewBox="0 0 10 10" style="vertical-align:-0.5px;margin-left:0.5px"><g transform="rotate(0 5 5)" fill="none" stroke="currentColor" stroke-width="1.1" stroke-linecap="round" stroke-linejoin="round"><path d="M5 9V1.5M1.8 4.6L5 1.4 8.2 4.6"/></g></svg></div><div class="t" style="top:150.44px;font-size:12px;color:#8c8c8c;left:954.50px;">Down: <svg width="9" height="9" viewBox="0 0 10 10" style="vertical-align:-0.5px;margin:0 0.5px 0 0"><path d="M3.2 3.2V1.9A1.3 1.3 0 1 0 1.9 3.2H8.1A1.3 1.3 0 1 0 6.8 1.9V8.1A1.3 1.3 0 1 0 8.1 6.8H1.9A1.3 1.3 0 1 0 3.2 8.1Z" fill="none" stroke="currentColor" stroke-width="1"/></svg><svg width="10" height="10" viewBox="0 0 10 10" style="vertical-align:-0.5px;margin-left:0.5px"><g transform="rotate(180 5 5)" fill="none" stroke="currentColor" stroke-width="1.1" stroke-linecap="round" stroke-linejoin="round"><path d="M5 9V1.5M1.8 4.6L5 1.4 8.2 4.6"/></g></svg></div><div class="t" style="top:150.44px;font-size:12px;color:#8c8c8c;left:1021.50px;">Columns: <svg width="9" height="9" viewBox="0 0 10 10" style="vertical-align:-0.5px;margin:0 0.5px 0 0"><path d="M3.2 3.2V1.9A1.3 1.3 0 1 0 1.9 3.2H8.1A1.3 1.3 0 1 0 6.8 1.9V8.1A1.3 1.3 0 1 0 8.1 6.8H1.9A1.3 1.3 0 1 0 3.2 8.1Z" fill="none" stroke="currentColor" stroke-width="1"/></svg><svg width="10" height="10" viewBox="0 0 10 10" style="vertical-align:-0.5px;margin-left:0.5px"><g transform="rotate(270 5 5)" fill="none" stroke="currentColor" stroke-width="1.1" stroke-linecap="round" stroke-linejoin="round"><path d="M5 9V1.5M1.8 4.6L5 1.4 8.2 4.6"/></g></svg></div><div class="t" style="top:150.44px;font-size:12px;color:#8c8c8c;left:1107.00px;">Operators: <svg width="9" height="9" viewBox="0 0 10 10" style="vertical-align:-0.5px;margin:0 0.5px 0 0"><path d="M3.2 3.2V1.9A1.3 1.3 0 1 0 1.9 3.2H8.1A1.3 1.3 0 1 0 6.8 1.9V8.1A1.3 1.3 0 1 0 8.1 6.8H1.9A1.3 1.3 0 1 0 3.2 8.1Z" fill="none" stroke="currentColor" stroke-width="1"/></svg><svg width="10" height="10" viewBox="0 0 10 10" style="vertical-align:-0.5px;margin-left:0.5px"><g transform="rotate(90 5 5)" fill="none" stroke="currentColor" stroke-width="1.1" stroke-linecap="round" stroke-linejoin="round"><path d="M5 9V1.5M1.8 4.6L5 1.4 8.2 4.6"/></g></svg></div><div class="t" style="top:150.44px;font-size:12px;color:#8c8c8c;left:1198.50px;">On/Off: <svg width="9" height="9" viewBox="0 0 10 10" style="vertical-align:-0.5px;margin:0 0.5px 0 0"><path d="M3.2 3.2V1.9A1.3 1.3 0 1 0 1.9 3.2H8.1A1.3 1.3 0 1 0 6.8 1.9V8.1A1.3 1.3 0 1 0 8.1 6.8H1.9A1.3 1.3 0 1 0 3.2 8.1Z" fill="none" stroke="currentColor" stroke-width="1"/></svg>B</div><div class="t" style="left:1270px;top:150.4px;width:41px;overflow:hidden;font-size:12px;color:#8c8c8c;letter-spacing:-0.15px">Exit: Esc</div><div class="btn" style="left:1317px;top:147px;width:50px;height:16px;border-radius:5px"></div><div class="t" style="top:149.34px;font-size:12px;color:#222;letter-spacing:0.2px;left:942.00px;width:800px;text-align:center;">Unset</div><div class="btn" style="left:1375px;top:147px;width:106px;height:16px;border-radius:5px"></div><div class="t" style="top:149.34px;font-size:12px;color:#222;letter-spacing:0.2px;left:1015.00px;width:800px;text-align:center;">Apply All</div><div class="r" style="left:1455.5px;top:150px;width:1px;height:10px;background:#e0e0e0;"></div><svg class="r" style="left:1462px;top:151px;" width="12" height="9" viewBox="0 0 12 9"><path d="M1.5 2l4.5 4.5 4.5-4.5" fill="none" stroke="#333" stroke-width="1.3"/></svg><svg width="0" height="0" style="position:absolute"><defs><linearGradient id="gstar" x1="0" y1="0" x2="0" y2="1"><stop offset="0" stop-color="#fff8c8"/><stop offset="0.5" stop-color="#f8d43c"/><stop offset="1" stop-color="#e49a2c"/></linearGradient></defs></svg><div class="r" style="left:424px;top:174px;width:1069px;height:28px;background:#ffffff;"></div><div class="r" style="left:1477px;top:174px;width:16px;height:28px;background:#f6f6f6;"></div><div class="r" style="left:424px;top:174px;width:1053px;height:27px;background:#fafafa;"></div><div class="r" style="left:424px;top:201px;width:1053px;height:1px;background:#dedede;"></div><div class="r" style="left:465px;top:180px;width:1px;height:16px;background:#e2e2e2;"></div><div class="r" style="left:862px;top:180px;width:1px;height:16px;background:#e2e2e2;"></div><div class="r" style="left:951px;top:180px;width:1px;height:16px;background:#e2e2e2;"></div><div class="r" style="left:1025px;top:180px;width:1px;height:16px;background:#e2e2e2;"></div><div class="r" style="left:1212px;top:180px;width:1px;height:16px;background:#e2e2e2;"></div><div class="r" style="left:1398px;top:180px;width:1px;height:16px;background:#e2e2e2;"></div><div class="r" style="left:1456px;top:180px;width:1px;height:16px;background:#e2e2e2;"></div><div class="t" style="top:182.64px;font-size:12px;color:#1e1e1e;font-weight:700;letter-spacing:-0.4px;left:47.50px;width:800px;text-align:center;">id</div><div class="t" style="top:182.64px;font-size:12px;color:#1e1e1e;font-weight:700;letter-spacing:-0.4px;left:263.50px;width:800px;text-align:center;">comment</div><div class="t" style="top:182.64px;font-size:12px;color:#1e1e1e;font-weight:700;letter-spacing:-0.4px;left:506.50px;width:800px;text-align:center;">from_user_id</div><div class="t" style="top:182.64px;font-size:12px;color:#1e1e1e;font-weight:700;letter-spacing:-0.4px;left:588.00px;width:800px;text-align:center;">to_user_id</div><div class="t" style="top:182.64px;font-size:12px;color:#1e1e1e;font-weight:700;letter-spacing:-0.4px;left:718.50px;width:800px;text-align:center;">created_at</div><div class="t" style="top:182.64px;font-size:12px;color:#1e1e1e;font-weight:700;letter-spacing:-0.4px;left:905.00px;width:800px;text-align:center;">updated_at</div><div class="t" style="top:182.64px;font-size:12px;color:#1e1e1e;font-weight:700;letter-spacing:-0.4px;left:1027.00px;width:800px;text-align:center;">item_id</div><div class="t" style="left:1466px;top:182.6px;width:11px;overflow:hidden;font-size:12px;font-weight:700;color:#1e1e1e;letter-spacing:-0.5px">is_active</div><div class="r" style="left:424px;top:202px;width:1069px;height:735px;overflow:hidden"><div class="row" style="left:0;top:0px;background:#ffffff"><div class="cell" style="right:1031.5px;letter-spacing:0.35px">101</div><div class="cell" style="left:45px;letter-spacing:0.29px">So fly <span class="em" style="margin-left:1px;margin-right:1px"><svg viewBox="0 0 14 14"><g fill="#dcb58a"><path d="M0.7 13.6V6.3C0.7 4.2 1.8 3.2 3.1 3.2S5.5 4.2 5.5 6.3V8.4L6.8 7.3 6.9 8.6 5.4 11V13.6Z"/></g><g fill="#d9b083" transform="translate(14 0) scale(-1 1)"><path d="M0.7 13.6V6.3C0.7 4.2 1.8 3.2 3.1 3.2S5.5 4.2 5.5 6.3V8.4L6.8 7.3 6.9 8.6 5.4 11V13.6Z"/></g><g fill="#444"><path d="M2.6 2.3l0.5-1.1 0.5 1.1z"/><path d="M5.4 1.9l0.5-1.1 0.5 1.1z"/><path d="M7.6 1.9l0.5-1.1 0.5 1.1z"/><path d="M10.4 2.3l0.5-1.1 0.5 1.1z"/></g></svg></span></div><div class="cell" style="right:545.5px;letter-spacing:0.75px">9429</div><div class="cell" style="left:531px;letter-spacing:0.75px">2024</div><div class="cell" style="left:605.5px;letter-spacing:0.8px">2015-11-21 22:12:54.754</div><div class="cell" style="left:792px;letter-spacing:0.8px">2015-12-08 15:30:56.841592</div><div class="cell" style="right:40px;letter-spacing:0.75px">15245</div></div><div class="row" style="left:0;top:24px;background:#f4f5f5"><div class="cell" style="right:1031.5px;letter-spacing:0.35px">102</div><div class="cell" style="left:45px;letter-spacing:0.29px">This background is amazing<span class="em" style="margin-left:1px;margin-right:1px"><svg viewBox="0 0 14 14"><circle cx="7" cy="7" r="6.5" fill="#f8c33a"/><path d="M2.8 5.2c0-1.2 1.6-1.4 1.9-0.4 0.3-1 1.9-0.8 1.9 0.4 0 1-1.9 2.2-1.9 2.2s-1.9-1.2-1.9-2.2zM7.4 5.2c0-1.2 1.6-1.4 1.9-0.4 0.3-1 1.9-0.8 1.9 0.4 0 1-1.9 2.2-1.9 2.2s-1.9-1.2-1.9-2.2z" fill="#e8303e"/><path d="M3.8 8.8Q7 11.8 10.2 8.8Q7 9.6 3.8 8.8z" fill="#5a3312"/></svg></span></div><div class="cell" style="right:545.5px;letter-spacing:0.75px">5757</div><div class="cell" style="left:531px;letter-spacing:0.75px">1654</div><div class="cell" style="left:605.5px;letter-spacing:0.8px">2015-08-10 21:23:57.505</div><div class="cell" style="left:792px;letter-spacing:0.8px">2015-12-08 15:30:56.866218</div><div class="cell" style="right:40px;letter-spacing:0.75px">4659</div></div><div class="row" style="left:0;top:48px;background:#ffffff"><div class="cell" style="right:1031.5px;letter-spacing:0.35px">103</div><div class="cell" style="left:45px;letter-spacing:0.29px">Love this dress so much <span class="em" style="margin-left:1px;margin-right:1px"><svg viewBox="0 0 14 14"><circle cx="7" cy="7" r="6.5" fill="#f8c33a"/><path d="M2.8 5.2c0-1.2 1.6-1.4 1.9-0.4 0.3-1 1.9-0.8 1.9 0.4 0 1-1.9 2.2-1.9 2.2s-1.9-1.2-1.9-2.2zM7.4 5.2c0-1.2 1.6-1.4 1.9-0.4 0.3-1 1.9-0.8 1.9 0.4 0 1-1.9 2.2-1.9 2.2s-1.9-1.2-1.9-2.2z" fill="#e8303e"/><path d="M3.8 8.8Q7 11.8 10.2 8.8Q7 9.6 3.8 8.8z" fill="#5a3312"/></svg></span> so nice for summer!</div><div class="cell" style="right:545.5px;letter-spacing:0.75px">7308</div><div class="cell" style="left:531px;letter-spacing:0.75px">12082</div><div class="cell" style="left:605.5px;letter-spacing:0.8px">2015-08-14 17:09:42.024</div><div class="cell" style="left:792px;letter-spacing:0.8px">2015-12-08 15:30:56.902289</div><div class="cell" style="right:40px;letter-spacing:0.75px">7070</div></div><div class="row" style="left:0;top:72px;background:#f4f5f5"><div class="cell" style="right:1031.5px;letter-spacing:0.35px">105</div><div class="cell" style="left:45px;letter-spacing:0.29px">Love!</div><div class="cell" style="right:545.5px;letter-spacing:0.75px">5569</div><div class="cell" style="left:531px;letter-spacing:0.75px">2777</div><div class="cell" style="left:605.5px;letter-spacing:0.8px">2015-12-06 10:37:39.44</div><div class="cell" style="left:792px;letter-spacing:0.8px">2015-12-08 15:30:56.984729</div><div class="cell" style="right:40px;letter-spacing:0.75px">16285</div></div><div class="row" style="left:0;top:96px;background:#ffffff"><div class="cell" style="right:1031.5px;letter-spacing:0.35px">106</div><div class="cell" style="left:45px;letter-spacing:0.29px">Thank u @emily</div><div class="cell" style="right:545.5px;letter-spacing:0.75px">94</div><div class="cell" style="left:531px;letter-spacing:0.75px">94</div><div class="cell" style="left:605.5px;letter-spacing:0.8px">2015-10-11 20:39:56.992</div><div class="cell" style="left:792px;letter-spacing:0.8px">2015-12-08 15:30:57.031655</div><div class="cell" style="right:40px;letter-spacing:0.75px">11832</div></div><div class="row" style="left:0;top:120px;background:#f4f5f5"><div class="cell" style="right:1031.5px;letter-spacing:0.35px">107</div><div class="cell" style="left:45px;letter-spacing:0.29px"><span class="em" style="margin-left:1px;margin-right:1px"><svg viewBox="0 0 14 14"><path d="M7 12.6C4.5 10.6 0.8 8 0.8 4.6 0.8 2.6 2.3 1.3 3.9 1.3 5.3 1.3 6.4 2.1 7 3.2 7.6 2.1 8.7 1.3 10.1 1.3 11.7 1.3 13.2 2.6 13.2 4.6 13.2 8 9.5 10.6 7 12.6Z" fill="#e52d2d"/></svg></span><span class="em" style="margin-left:1px;margin-right:1px"><svg viewBox="0 0 14 14"><path d="M7 12.6C4.5 10.6 0.8 8 0.8 4.6 0.8 2.6 2.3 1.3 3.9 1.3 5.3 1.3 6.4 2.1 7 3.2 7.6 2.1 8.7 1.3 10.1 1.3 11.7 1.3 13.2 2.6 13.2 4.6 13.2 8 9.5 10.6 7 12.6Z" fill="#e52d2d"/></svg></span><span class="em" style="margin-left:1px;margin-right:1px"><svg viewBox="0 0 14 14"><path d="M7 12.6C4.5 10.6 0.8 8 0.8 4.6 0.8 2.6 2.3 1.3 3.9 1.3 5.3 1.3 6.4 2.1 7 3.2 7.6 2.1 8.7 1.3 10.1 1.3 11.7 1.3 13.2 2.6 13.2 4.6 13.2 8 9.5 10.6 7 12.6Z" fill="#e52d2d"/></svg></span></div><div class="cell" style="right:545.5px;letter-spacing:0.75px">5569</div><div class="cell" style="left:531px;letter-spacing:0.75px">5216</div><div class="cell" style="left:605.5px;letter-spacing:0.8px">2015-11-24 22:02:58.828</div><div class="cell" style="left:792px;letter-spacing:0.8px">2015-12-08 15:30:57.072241</div><div class="cell" style="right:40px;letter-spacing:0.75px">15451</div></div><div class="row" style="left:0;top:144px;background:#ffffff"><div class="cell" style="right:1031.5px;letter-spacing:0.35px">108</div><div class="cell" style="left:45px;letter-spacing:0.29px">Love the glasses!</div><div class="cell" style="right:545.5px;letter-spacing:0.75px">4347</div><div class="cell" style="left:531px;letter-spacing:0.75px">7239</div><div class="cell" style="left:605.5px;letter-spacing:0.8px">2015-08-01 14:24:44.783</div><div class="cell" style="left:792px;letter-spacing:0.8px">2015-12-08 15:30:57.105485</div><div class="cell" style="right:40px;letter-spacing:0.75px">5465</div></div><div class="row" style="left:0;top:168px;background:#f4f5f5"><div class="cell" style="right:1031.5px;letter-spacing:0.35px">109</div><div class="cell" style="left:45px;letter-spacing:0.29px">Supercool<span class="em" style="margin-left:1px;margin-right:1px"><svg viewBox="0 0 14 14"><path d="M3 1.5l2.6 3.4 1.4-3.1 0.8 3 2.8-2.6-1 3.5 3.6 0.7-3.2 1.8 3 3.8-3.8-2-0.3 3.8-1.8-3.2-2 2.6 0.2-3.2-3.6 1.6 2.6-2.6L0.8 6.2l3.5-0.4z" fill="#e8452c"/><path d="M7 4.6l0.9 1.6 1.8-0.4-1 1.5 1.3 1.2-1.8 0.1-0.4 1.7-1-1.4-1.5 0.9 0.4-1.7-1.6-0.9 1.8-0.6z" fill="#f9a441"/><circle cx="7" cy="7.3" r="1.5" fill="#fff6c0"/></svg></span><span class="em" style="margin-left:1px;margin-right:1px"><svg viewBox="0 0 14 14"><path d="M3 1.5l2.6 3.4 1.4-3.1 0.8 3 2.8-2.6-1 3.5 3.6 0.7-3.2 1.8 3 3.8-3.8-2-0.3 3.8-1.8-3.2-2 2.6 0.2-3.2-3.6 1.6 2.6-2.6L0.8 6.2l3.5-0.4z" fill="#e8452c"/><path d="M7 4.6l0.9 1.6 1.8-0.4-1 1.5 1.3 1.2-1.8 0.1-0.4 1.7-1-1.4-1.5 0.9 0.4-1.7-1.6-0.9 1.8-0.6z" fill="#f9a441"/><circle cx="7" cy="7.3" r="1.5" fill="#fff6c0"/></svg></span><span class="em" style="margin-left:1px;margin-right:1px"><svg viewBox="0 0 14 14"><path d="M3 1.5l2.6 3.4 1.4-3.1 0.8 3 2.8-2.6-1 3.5 3.6 0.7-3.2 1.8 3 3.8-3.8-2-0.3 3.8-1.8-3.2-2 2.6 0.2-3.2-3.6 1.6 2.6-2.6L0.8 6.2l3.5-0.4z" fill="#e8452c"/><path d="M7 4.6l0.9 1.6 1.8-0.4-1 1.5 1.3 1.2-1.8 0.1-0.4 1.7-1-1.4-1.5 0.9 0.4-1.7-1.6-0.9 1.8-0.6z" fill="#f9a441"/><circle cx="7" cy="7.3" r="1.5" fill="#fff6c0"/></svg></span></div><div class="cell" style="right:545.5px;letter-spacing:0.75px">2609</div><div class="cell" style="left:531px;letter-spacing:0.75px">4820</div><div class="cell" style="left:605.5px;letter-spacing:0.8px">2015-09-04 09:28:30.842</div><div class="cell" style="left:792px;letter-spacing:0.8px">2015-12-08 15:30:57.140823</div><div class="cell" style="right:40px;letter-spacing:0.75px">8873</div></div><div class="row" style="left:0;top:192px;background:#ffffff"><div class="cell" style="right:1031.5px;letter-spacing:0.35px">110</div><div class="cell" style="left:45px;letter-spacing:0.29px">Would love to! @mith <span class="em" style="margin-left:1px;margin-right:1px"><svg viewBox="0 0 14 14"><circle cx="7" cy="7" r="6.5" fill="#f8c33a"/><ellipse cx="4.6" cy="5" rx="0.9" ry="1.2" fill="#5a3312"/><ellipse cx="9.4" cy="5" rx="0.9" ry="1.2" fill="#5a3312"/><rect x="3.2" y="7.8" width="7.6" height="3" rx="1.4" fill="#fff" stroke="#5a3312" stroke-width="0.6"/></svg></span></div><div class="cell" style="right:545.5px;letter-spacing:0.75px">5027</div><div class="cell" style="left:531px;letter-spacing:0.75px">5027</div><div class="cell" style="left:605.5px;letter-spacing:0.8px">2015-08-18 20:27:10.945</div><div class="cell" style="left:792px;letter-spacing:0.8px">2015-12-08 15:30:57.166027</div><div class="cell" style="right:40px;letter-spacing:0.75px">6029</div></div><div class="row" style="left:0;top:216px;background:#f4f5f5"><div class="cell" style="right:1031.5px;letter-spacing:0.35px">111</div><div class="cell" style="left:45px;letter-spacing:0.29px">Love the blouse!</div><div class="cell" style="right:545.5px;letter-spacing:0.75px">4118</div><div class="cell" style="left:531px;letter-spacing:0.75px">186</div><div class="cell" style="left:605.5px;letter-spacing:0.8px">2015-08-18 23:00:33.919</div><div class="cell" style="left:792px;letter-spacing:0.8px">2015-12-08 15:30:57.203625</div><div class="cell" style="right:40px;letter-spacing:0.75px">7454</div></div><div class="row" style="left:0;top:240px;background:#ffffff"><div class="cell" style="right:1031.5px;letter-spacing:0.35px">112</div><div class="cell" style="left:45px;letter-spacing:0.29px"><span class="em" style="margin-left:1px;margin-right:1px"><svg viewBox="0 0 14 14"><path d="M7.00 0.90L8.70 5.45L13.56 5.67L9.76 8.70L11.06 13.38L7.00 10.70L2.94 13.38L4.24 8.70L0.44 5.67L5.30 5.45Z" fill="url(#gstar)"/><circle cx="3.4" cy="2.4" r="0.8" fill="#f2c83a"/><circle cx="10.6" cy="2.4" r="0.8" fill="#f2c83a"/><circle cx="7" cy="1.3" r="0.7" fill="#f5d978"/><path d="M6.5 12.4h1l0.3 1.6h-1.6z" fill="#e09a30"/></svg></span><span class="em" style="margin-left:1px;margin-right:1px"><svg viewBox="0 0 14 14"><path d="M7.00 0.90L8.70 5.45L13.56 5.67L9.76 8.70L11.06 13.38L7.00 10.70L2.94 13.38L4.24 8.70L0.44 5.67L5.30 5.45Z" fill="url(#gstar)"/><circle cx="3.4" cy="2.4" r="0.8" fill="#f2c83a"/><circle cx="10.6" cy="2.4" r="0.8" fill="#f2c83a"/><circle cx="7" cy="1.3" r="0.7" fill="#f5d978"/><path d="M6.5 12.4h1l0.3 1.6h-1.6z" fill="#e09a30"/></svg></span><span class="em" style="margin-left:1px;margin-right:1px"><svg viewBox="0 0 14 14"><path d="M7.00 0.90L8.70 5.45L13.56 5.67L9.76 8.70L11.06 13.38L7.00 10.70L2.94 13.38L4.24 8.70L0.44 5.67L5.30 5.45Z" fill="url(#gstar)"/><circle cx="3.4" cy="2.4" r="0.8" fill="#f2c83a"/><circle cx="10.6" cy="2.4" r="0.8" fill="#f2c83a"/><circle cx="7" cy="1.3" r="0.7" fill="#f5d978"/><path d="M6.5 12.4h1l0.3 1.6h-1.6z" fill="#e09a30"/></svg></span></div><div class="cell" style="right:545.5px;letter-spacing:0.75px">5569</div><div class="cell" style="left:531px;letter-spacing:0.75px">4877</div><div class="cell" style="left:605.5px;letter-spacing:0.8px">2015-11-30 12:54:49.735</div><div class="cell" style="left:792px;letter-spacing:0.8px">2015-12-08 15:30:57.244144</div><div class="cell" style="right:40px;letter-spacing:0.75px">15914</div></div><div class="row" style="left:0;top:264px;background:#f4f5f5"><div class="cell" style="right:1031.5px;letter-spacing:0.35px">113</div><div class="cell" style="left:45px;letter-spacing:0.29px">Love that jacket! Outfit is fab <span class="em" style="margin-left:1px;margin-right:1px"><svg viewBox="0 0 14 14"><g fill="#f1d9c2"><path d="M0.7 13.6V6.3C0.7 4.2 1.8 3.2 3.1 3.2S5.5 4.2 5.5 6.3V8.4L6.8 7.3 6.9 8.6 5.4 11V13.6Z"/></g><g fill="#eed3b9" transform="translate(14 0) scale(-1 1)"><path d="M0.7 13.6V6.3C0.7 4.2 1.8 3.2 3.1 3.2S5.5 4.2 5.5 6.3V8.4L6.8 7.3 6.9 8.6 5.4 11V13.6Z"/></g><g fill="#444"><path d="M2.6 2.3l0.5-1.1 0.5 1.1z"/><path d="M5.4 1.9l0.5-1.1 0.5 1.1z"/><path d="M7.6 1.9l0.5-1.1 0.5 1.1z"/><path d="M10.4 2.3l0.5-1.1 0.5 1.1z"/></g></svg></span></div><div class="cell" style="right:545.5px;letter-spacing:0.75px">7308</div><div class="cell" style="left:531px;letter-spacing:0.75px">3075</div><div class="cell" style="left:605.5px;letter-spacing:0.8px">2015-08-24 19:09:34.776</div><div class="cell" style="left:792px;letter-spacing:0.8px">2015-12-08 15:30:57.280947</div><div class="cell" style="right:40px;letter-spacing:0.75px">8037</div></div><div class="row" style="left:0;top:288px;background:#ffffff"><div class="cell" style="right:1031.5px;letter-spacing:0.35px">114</div><div class="cell" style="left:45px;letter-spacing:0.29px">Jacket <span class="em" style="margin-left:1px;margin-right:1px"><svg viewBox="0 0 14 14"><path d="M7 13.3C3.8 13.3 2.2 11 2.2 8.7 2.2 5.8 4.5 4.6 5.2 1 7.5 2.3 8 4.3 7.8 5.6 8.5 4.9 9 4 9.1 3.3 11 5 11.8 6.9 11.8 8.7 11.8 11.2 10 13.3 7 13.3Z" fill="#f36a21"/><path d="M7 13.2C5.5 13.2 4.6 12 4.6 10.9 4.6 9.3 6 8.6 6.5 7 7.8 8 9.4 9.2 9.4 10.9 9.4 12.1 8.5 13.2 7 13.2Z" fill="#fbc241"/></svg></span></div><div class="cell" style="right:545.5px;letter-spacing:0.75px">1780</div><div class="cell" style="left:531px;letter-spacing:0.75px">1365</div><div class="cell" style="left:605.5px;letter-spacing:0.8px">2015-07-12 06:20:07.091</div><div class="cell" style="left:792px;letter-spacing:0.8px">2015-12-08 15:30:57.307644</div><div class="cell" style="right:40px;letter-spacing:0.75px">2538</div></div><div class="row" style="left:0;top:312px;background:#f4f5f5"><div class="cell" style="right:1031.5px;letter-spacing:0.35px">115</div><div class="cell" style="left:45px;letter-spacing:0.29px"><span class="em" style="margin-left:1px;margin-right:1px"><svg viewBox="0 0 14 14"><path d="M7 12.6C4.5 10.6 0.8 8 0.8 4.6 0.8 2.6 2.3 1.3 3.9 1.3 5.3 1.3 6.4 2.1 7 3.2 7.6 2.1 8.7 1.3 10.1 1.3 11.7 1.3 13.2 2.6 13.2 4.6 13.2 8 9.5 10.6 7 12.6Z" fill="#f4c03f"/></svg></span><span class="em" style="margin-left:1px;margin-right:1px"><svg viewBox="0 0 14 14"><path d="M7 12.6C4.5 10.6 0.8 8 0.8 4.6 0.8 2.6 2.3 1.3 3.9 1.3 5.3 1.3 6.4 2.1 7 3.2 7.6 2.1 8.7 1.3 10.1 1.3 11.7 1.3 13.2 2.6 13.2 4.6 13.2 8 9.5 10.6 7 12.6Z" fill="#f4c03f"/></svg></span><span class="em" style="margin-left:1px;margin-right:1px"><svg viewBox="0 0 14 14"><path d="M7 12.6C4.5 10.6 0.8 8 0.8 4.6 0.8 2.6 2.3 1.3 3.9 1.3 5.3 1.3 6.4 2.1 7 3.2 7.6 2.1 8.7 1.3 10.1 1.3 11.7 1.3 13.2 2.6 13.2 4.6 13.2 8 9.5 10.6 7 12.6Z" fill="#f4c03f"/></svg></span></div><div class="cell" style="right:545.5px;letter-spacing:0.75px">5569</div><div class="cell" style="left:531px;letter-spacing:0.75px">5969</div><div class="cell" style="left:605.5px;letter-spacing:0.8px">2015-09-13 14:44:32.209</div><div class="cell" style="left:792px;letter-spacing:0.8px">2015-12-08 15:30:57.34342</div><div class="cell" style="right:40px;letter-spacing:0.75px">9382</div></div><div class="row" style="left:0;top:336px;background:#ffffff"><div class="cell" style="right:1031.5px;letter-spacing:0.35px">116</div><div class="cell" style="left:45px;letter-spacing:0.29px">@emily thank you soooo much beautiful!!!! To God Be The Glory!!!!</div><div class="cell" style="right:545.5px;letter-spacing:0.75px">12431</div><div class="cell" style="left:531px;letter-spacing:0.75px">12431</div><div class="cell" style="left:605.5px;letter-spacing:0.8px">2015-10-30 13:55:18.745</div><div class="cell" style="left:792px;letter-spacing:0.8px">2015-12-08 15:30:57.373218</div><div class="cell" style="right:40px;letter-spacing:0.75px">13256</div></div><div class="row" style="left:0;top:360px;background:#f4f5f5"><div class="cell" style="right:1031.5px;letter-spacing:0.35px">117</div><div class="cell" style="left:45px;letter-spacing:0.29px">you are so pretty x</div><div class="cell" style="right:545.5px;letter-spacing:0.75px">8180</div><div class="cell" style="left:531px;letter-spacing:0.75px">12005</div><div class="cell" style="left:605.5px;letter-spacing:0.8px">2015-10-11 18:28:20.447</div><div class="cell" style="left:792px;letter-spacing:0.8px">2015-12-08 15:30:57.408816</div><div class="cell" style="right:40px;letter-spacing:0.75px">11829</div></div><div class="row" style="left:0;top:384px;background:#ffffff"><div class="cell" style="right:1031.5px;letter-spacing:0.35px">118</div><div class="cell" style="left:45px;letter-spacing:0.29px">Ur legs are to die for<span class="em" style="margin-left:1px;margin-right:1px"><svg viewBox="0 0 14 14"><g fill="#f5c33b"><path d="M0.7 13.6V6.3C0.7 4.2 1.8 3.2 3.1 3.2S5.5 4.2 5.5 6.3V8.4L6.8 7.3 6.9 8.6 5.4 11V13.6Z"/></g><g fill="#f0b82e" transform="translate(14 0) scale(-1 1)"><path d="M0.7 13.6V6.3C0.7 4.2 1.8 3.2 3.1 3.2S5.5 4.2 5.5 6.3V8.4L6.8 7.3 6.9 8.6 5.4 11V13.6Z"/></g><g fill="#444"><path d="M2.6 2.3l0.5-1.1 0.5 1.1z"/><path d="M5.4 1.9l0.5-1.1 0.5 1.1z"/><path d="M7.6 1.9l0.5-1.1 0.5 1.1z"/><path d="M10.4 2.3l0.5-1.1 0.5 1.1z"/></g></svg></span><span class="em" style="margin-left:1px;margin-right:1px"><svg viewBox="0 0 14 14"><path d="M7 12.6C4.5 10.6 0.8 8 0.8 4.6 0.8 2.6 2.3 1.3 3.9 1.3 5.3 1.3 6.4 2.1 7 3.2 7.6 2.1 8.7 1.3 10.1 1.3 11.7 1.3 13.2 2.6 13.2 4.6 13.2 8 9.5 10.6 7 12.6Z" fill="#e94c9a"/><path d="M10.5 2.5l0.5 1.2 1.2 0.5-1.2 0.5-0.5 1.2-0.5-1.2-1.2-0.5 1.2-0.5z" fill="#ffe27a"/></svg></span></div><div class="cell" style="right:545.5px;letter-spacing:0.75px">9940</div><div class="cell" style="left:531px;letter-spacing:0.75px">7239</div><div class="cell" style="left:605.5px;letter-spacing:0.8px">2015-08-05 13:26:43.077</div><div class="cell" style="left:792px;letter-spacing:0.8px">2015-12-08 15:30:57.443741</div><div class="cell" style="right:40px;letter-spacing:0.75px">5978</div></div><div class="row" style="left:0;top:408px;background:#f4f5f5"><div class="cell" style="right:1031.5px;letter-spacing:0.35px">119</div><div class="cell" style="left:45px;letter-spacing:0.29px">Thank you beautiful @laurel</div><div class="cell" style="right:545.5px;letter-spacing:0.75px">5559</div><div class="cell" style="left:531px;letter-spacing:0.75px">5559</div><div class="cell" style="left:605.5px;letter-spacing:0.8px">2015-10-01 22:05:51.961</div><div class="cell" style="left:792px;letter-spacing:0.8px">2015-12-08 15:30:57.480509</div><div class="cell" style="right:40px;letter-spacing:0.75px">10937</div></div><div class="row" style="left:0;top:432px;background:#ffffff"><div class="cell" style="right:1031.5px;letter-spacing:0.35px">120</div><div class="cell" style="left:45px;letter-spacing:0.29px">Thank you! <span class="em" style="margin-left:1px;margin-right:1px"><svg viewBox="0 0 14 14"><circle cx="7" cy="7" r="6.5" fill="#f8c33a"/><path d="M3.6 4.8l1.6 0.6M3.8 6.2l1.4-0.5" stroke="#5a3312" stroke-width="0.8"/><ellipse cx="9.4" cy="5.2" rx="0.8" ry="1.1" fill="#5a3312"/><path d="M6.2 8.6c0.8 0 0.8 0.7 0 1 0.8 0.2 0.8 1 0 1" fill="none" stroke="#5a3312" stroke-width="0.8"/><path d="M10.2 9.6c0-0.9 1.2-1 1.4-0.3 0.2-0.7 1.4-0.6 1.4 0.3 0 0.7-1.4 1.6-1.4 1.6s-1.4-0.9-1.4-1.6z" fill="#e8303e"/></svg></span></div><div class="cell" style="right:545.5px;letter-spacing:0.75px">11123</div><div class="cell" style="left:531px;letter-spacing:0.75px">11123</div><div class="cell" style="left:605.5px;letter-spacing:0.8px">2015-10-11 13:20:46.351</div><div class="cell" style="left:792px;letter-spacing:0.8px">2015-12-08 15:30:57.523717</div><div class="cell" style="right:40px;letter-spacing:0.75px">11756</div></div><div class="row" style="left:0;top:456px;background:#f4f5f5"><div class="cell" style="right:1031.5px;letter-spacing:0.35px">121</div><div class="cell" style="left:45px;letter-spacing:0.29px">Love this!</div><div class="cell" style="right:545.5px;letter-spacing:0.75px">5569</div><div class="cell" style="left:531px;letter-spacing:0.75px">8691</div><div class="cell" style="left:605.5px;letter-spacing:0.8px">2015-10-22 09:42:05.573</div><div class="cell" style="left:792px;letter-spacing:0.8px">2015-12-08 15:30:57.573733</div><div class="cell" style="right:40px;letter-spacing:0.75px">12659</div></div><div class="row" style="left:0;top:480px;background:#ffffff"><div class="cell" style="right:1031.5px;letter-spacing:0.35px">122</div><div class="cell" style="left:45px;letter-spacing:0.29px">Amazing pastel theme <span class="em" style="margin-left:1px;margin-right:1px"><svg viewBox="0 0 14 14"><circle cx="7" cy="7" r="6.5" fill="#f8c33a"/><ellipse cx="4.6" cy="5" rx="0.9" ry="1.2" fill="#5a3312"/><ellipse cx="9.4" cy="5" rx="0.9" ry="1.2" fill="#5a3312"/><rect x="3.2" y="7.8" width="7.6" height="3" rx="1.4" fill="#fff" stroke="#5a3312" stroke-width="0.6"/></svg></span></div><div class="cell" style="right:545.5px;letter-spacing:0.75px">5757</div><div class="cell" style="left:531px;letter-spacing:0.75px">5879</div><div class="cell" style="left:605.5px;letter-spacing:0.8px">2015-08-13 20:59:06.623</div><div class="cell" style="left:792px;letter-spacing:0.8px">2015-12-08 15:30:57.605037</div><div class="cell" style="right:40px;letter-spacing:0.75px">6929</div></div><div class="row" style="left:0;top:504px;background:#f4f5f5"><div class="cell" style="right:1031.5px;letter-spacing:0.35px">123</div><div class="cell" style="left:45px;letter-spacing:0.29px">Love! <span class="em" style="margin-left:1px;margin-right:1px"><svg viewBox="0 0 14 14"><path d="M5.5 2l1.1 3.2 3.2 1.1-3.2 1.1-1.1 3.2-1.1-3.2L1.2 6.3l3.2-1.1z" fill="#f9cf45"/><path d="M11 8.5l0.6 1.5 1.5 0.6-1.5 0.6-0.6 1.5-0.6-1.5-1.5-0.6 1.5-0.6z" fill="#f9cf45"/><path d="M11 1.5l0.4 1 1 0.4-1 0.4-0.4 1-0.4-1-1-0.4 1-0.4z" fill="#f9cf45"/></svg></span><span class="em" style="margin-left:1px;margin-right:1px"><svg viewBox="0 0 14 14"><path d="M5.5 2l1.1 3.2 3.2 1.1-3.2 1.1-1.1 3.2-1.1-3.2L1.2 6.3l3.2-1.1z" fill="#f9cf45"/><path d="M11 8.5l0.6 1.5 1.5 0.6-1.5 0.6-0.6 1.5-0.6-1.5-1.5-0.6 1.5-0.6z" fill="#f9cf45"/><path d="M11 1.5l0.4 1 1 0.4-1 0.4-0.4 1-0.4-1-1-0.4 1-0.4z" fill="#f9cf45"/></svg></span></div><div class="cell" style="right:545.5px;letter-spacing:0.75px">5569</div><div class="cell" style="left:531px;letter-spacing:0.75px">6334</div><div class="cell" style="left:605.5px;letter-spacing:0.8px">2015-11-21 14:13:57.187</div><div class="cell" style="left:792px;letter-spacing:0.8px">2015-12-08 15:30:57.641314</div><div class="cell" style="right:40px;letter-spacing:0.75px">15194</div></div><div class="row" style="left:0;top:528px;background:#ffffff"><div class="cell" style="right:1031.5px;letter-spacing:0.35px">124</div><div class="cell" style="left:45px;letter-spacing:0.29px">Beautiful!! <span class="em" style="margin-left:1px;margin-right:1px"><svg viewBox="0 0 14 14"><path d="M4.5 13C3 11.8 0.8 10.3 0.8 8.2 0.8 7 1.7 6.2 2.7 6.2 3.5 6.2 4.2 6.7 4.5 7.3 4.9 6.7 5.5 6.2 6.3 6.2 7.3 6.2 8.2 7 8.2 8.2 8.2 10.3 6 11.8 4.5 13Z" fill="#e94c9a"/><path d="M10 7.5C8.8 6.5 7 5.3 7 3.6 7 2.6 7.7 2 8.5 2 9.2 2 9.7 2.4 10 2.9 10.3 2.4 10.8 2 11.5 2 12.3 2 13 2.6 13 3.6 13 5.3 11.2 6.5 10 7.5Z" fill="#e94c9a"/></svg></span><span class="em" style="margin-left:1px;margin-right:1px"><svg viewBox="0 0 14 14"><path d="M4.5 13C3 11.8 0.8 10.3 0.8 8.2 0.8 7 1.7 6.2 2.7 6.2 3.5 6.2 4.2 6.7 4.5 7.3 4.9 6.7 5.5 6.2 6.3 6.2 7.3 6.2 8.2 7 8.2 8.2 8.2 10.3 6 11.8 4.5 13Z" fill="#e94c9a"/><path d="M10 7.5C8.8 6.5 7 5.3 7 3.6 7 2.6 7.7 2 8.5 2 9.2 2 9.7 2.4 10 2.9 10.3 2.4 10.8 2 11.5 2 12.3 2 13 2.6 13 3.6 13 5.3 11.2 6.5 10 7.5Z" fill="#e94c9a"/></svg></span></div><div class="cell" style="right:545.5px;letter-spacing:0.75px">5569</div><div class="cell" style="left:531px;letter-spacing:0.75px">5733</div><div class="cell" style="left:605.5px;letter-spacing:0.8px">2015-11-04 12:24:41.227</div><div class="cell" style="left:792px;letter-spacing:0.8px">2015-12-08 15:30:57.684731</div><div class="cell" style="right:40px;letter-spacing:0.75px">13680</div></div><div class="row" style="left:0;top:552px;background:#f4f5f5"><div class="cell" style="right:1031.5px;letter-spacing:0.35px">125</div><div class="cell" style="left:45px;letter-spacing:0.29px">Love this photo! Your hair is gorgeous <span class="em" style="margin-left:1px;margin-right:1px"><svg viewBox="0 0 14 14"><circle cx="7" cy="7" r="6.5" fill="#f8c33a"/><path d="M3.6 4.8l1.6 0.6M3.8 6.2l1.4-0.5" stroke="#5a3312" stroke-width="0.8"/><ellipse cx="9.4" cy="5.2" rx="0.8" ry="1.1" fill="#5a3312"/><path d="M6.2 8.6c0.8 0 0.8 0.7 0 1 0.8 0.2 0.8 1 0 1" fill="none" stroke="#5a3312" stroke-width="0.8"/><path d="M10.2 9.6c0-0.9 1.2-1 1.4-0.3 0.2-0.7 1.4-0.6 1.4 0.3 0 0.7-1.4 1.6-1.4 1.6s-1.4-0.9-1.4-1.6z" fill="#e8303e"/></svg></span> x</div><div class="cell" style="right:545.5px;letter-spacing:0.75px">7237</div><div class="cell" style="left:531px;letter-spacing:0.75px">8957</div><div class="cell" style="left:605.5px;letter-spacing:0.8px">2015-08-26 16:03:27.513</div><div class="cell" style="left:792px;letter-spacing:0.8px">2015-12-08 15:30:57.715562</div><div class="cell" style="right:40px;letter-spacing:0.75px">8011</div></div><div class="row" style="left:0;top:576px;background:#ffffff"><div class="cell" style="right:1031.5px;letter-spacing:0.35px">126</div><div class="cell" style="left:45px;letter-spacing:0.29px">@Emily Thank you<span class="em" style="margin-left:1px;margin-right:1px"><svg viewBox="0 0 14 14"><path d="M3.2 3.2C3.2 1.7 4.5 1 5.6 1.6 6.4 2.1 6 3.5 5 3.6z" fill="#222"/><path d="M5.2 4.3L6.5 4.6 7 8 3.5 9.5 1 8.8 3 8 4.8 7.2z" fill="#d42127"/><path d="M7 7.2L10.8 5.3 11.5 7.5 9.5 10.5 5.5 10.2z" fill="#5a0c10"/><path d="M7.5 3.5l0.6-2.6M4.4 5.3L3.4 7.3M4.5 10l-0.5 2.5 1 0.6M7.5 10.3L8.5 12.4 9.6 12.6" stroke="#c98f68" stroke-width="0.6" fill="none"/></svg></span></div><div class="cell" style="right:545.5px;letter-spacing:0.75px">11936</div><div class="cell" style="left:531px;letter-spacing:0.75px">11936</div><div class="cell" style="left:605.5px;letter-spacing:0.8px">2015-11-27 10:58:46.792</div><div class="cell" style="left:792px;letter-spacing:0.8px">2015-12-08 15:30:57.762048</div><div class="cell" style="right:40px;letter-spacing:0.75px">15661</div></div><div class="row" style="left:0;top:600px;background:#f4f5f5"><div class="cell" style="right:1031.5px;letter-spacing:0.35px">127</div><div class="cell" style="left:45px;letter-spacing:0.29px">Stunning!</div><div class="cell" style="right:545.5px;letter-spacing:0.75px">12141</div><div class="cell" style="left:531px;letter-spacing:0.75px">8303</div><div class="cell" style="left:605.5px;letter-spacing:0.8px">2015-11-13 22:30:16.253</div><div class="cell" style="left:792px;letter-spacing:0.8px">2015-12-08 15:30:57.808192</div><div class="cell" style="right:40px;letter-spacing:0.75px">14524</div></div><div class="row" style="left:0;top:624px;background:#ffffff"><div class="cell" style="right:1031.5px;letter-spacing:0.35px">128</div><div class="cell" style="left:45px;letter-spacing:0.29px"><span class="em" style="margin-left:1px;margin-right:1px"><svg viewBox="0 0 14 14"><path d="M7 12.6C4.5 10.6 0.8 8 0.8 4.6 0.8 2.6 2.3 1.3 3.9 1.3 5.3 1.3 6.4 2.1 7 3.2 7.6 2.1 8.7 1.3 10.1 1.3 11.7 1.3 13.2 2.6 13.2 4.6 13.2 8 9.5 10.6 7 12.6Z" fill="#e52d2d"/></svg></span><span class="em" style="margin-left:1px;margin-right:1px"><svg viewBox="0 0 14 14"><path d="M7 12.6C4.5 10.6 0.8 8 0.8 4.6 0.8 2.6 2.3 1.3 3.9 1.3 5.3 1.3 6.4 2.1 7 3.2 7.6 2.1 8.7 1.3 10.1 1.3 11.7 1.3 13.2 2.6 13.2 4.6 13.2 8 9.5 10.6 7 12.6Z" fill="#e52d2d"/></svg></span><span class="em" style="margin-left:1px;margin-right:1px"><svg viewBox="0 0 14 14"><path d="M7 12.6C4.5 10.6 0.8 8 0.8 4.6 0.8 2.6 2.3 1.3 3.9 1.3 5.3 1.3 6.4 2.1 7 3.2 7.6 2.1 8.7 1.3 10.1 1.3 11.7 1.3 13.2 2.6 13.2 4.6 13.2 8 9.5 10.6 7 12.6Z" fill="#e52d2d"/></svg></span></div><div class="cell" style="right:545.5px;letter-spacing:0.75px">5569</div><div class="cell" style="left:531px;letter-spacing:0.75px">7308</div><div class="cell" style="left:605.5px;letter-spacing:0.8px">2015-10-15 10:02:47.99</div><div class="cell" style="left:792px;letter-spacing:0.8px">2015-12-08 15:30:57.855466</div><div class="cell" style="right:40px;letter-spacing:0.75px">12145</div></div><div class="row" style="left:0;top:648px;background:#f4f5f5"><div class="cell" style="right:1031.5px;letter-spacing:0.35px">129</div><div class="cell" style="left:45px;letter-spacing:0.29px">Beautiful action shot!</div><div class="cell" style="right:545.5px;letter-spacing:0.75px">7372</div><div class="cell" style="left:531px;letter-spacing:0.75px">9946</div><div class="cell" style="left:605.5px;letter-spacing:0.8px">2015-08-14 15:15:21.247</div><div class="cell" style="left:792px;letter-spacing:0.8px">2015-12-08 15:30:57.893964</div><div class="cell" style="right:40px;letter-spacing:0.75px">2893</div></div><div class="row" style="left:0;top:672px;background:#ffffff"><div class="cell" style="right:1031.5px;letter-spacing:0.35px">130</div><div class="cell" style="left:45px;letter-spacing:0.29px"><span class="em" style="margin-left:1px;margin-right:1px"><svg viewBox="0 0 14 14"><path d="M7 12.6C4.5 10.6 0.8 8 0.8 4.6 0.8 2.6 2.3 1.3 3.9 1.3 5.3 1.3 6.4 2.1 7 3.2 7.6 2.1 8.7 1.3 10.1 1.3 11.7 1.3 13.2 2.6 13.2 4.6 13.2 8 9.5 10.6 7 12.6Z" fill="#e52d2d"/></svg></span><span class="em" style="margin-left:1px;margin-right:1px"><svg viewBox="0 0 14 14"><path d="M7 12.6C4.5 10.6 0.8 8 0.8 4.6 0.8 2.6 2.3 1.3 3.9 1.3 5.3 1.3 6.4 2.1 7 3.2 7.6 2.1 8.7 1.3 10.1 1.3 11.7 1.3 13.2 2.6 13.2 4.6 13.2 8 9.5 10.6 7 12.6Z" fill="#e52d2d"/></svg></span></div><div class="cell" style="right:545.5px;letter-spacing:0.75px">8995</div><div class="cell" style="left:531px;letter-spacing:0.75px">9001</div><div class="cell" style="left:605.5px;letter-spacing:0.8px">2015-08-07 19:43:50.923</div><div class="cell" style="left:792px;letter-spacing:0.8px">2015-12-08 15:30:57.926282</div><div class="cell" style="right:40px;letter-spacing:0.75px">6464</div></div><div class="row" style="left:0;top:696px;background:#f4f5f5"><div class="cell" style="right:1031.5px;letter-spacing:0.35px">131</div><div class="cell" style="left:45px;letter-spacing:0.29px"><span class="em" style="margin-left:1px;margin-right:1px"><svg viewBox="0 0 14 14"><g fill="#f5a5c8"><circle cx="7" cy="3.3" r="2.8"/><circle cx="10.6" cy="6" r="2.8"/><circle cx="9.2" cy="10.3" r="2.8"/><circle cx="4.8" cy="10.3" r="2.8"/><circle cx="3.4" cy="6" r="2.8"/></g><circle cx="7" cy="7" r="1.6" fill="#f7d14c"/></svg></span></div><div class="cell" style="right:545.5px;letter-spacing:0.75px">5569</div><div class="cell" style="left:531px;letter-spacing:0.75px">7910</div><div class="cell" style="left:605.5px;letter-spacing:0.8px">2015-08-24 21:08:52.771</div><div class="cell" style="left:792px;letter-spacing:0.8px">2015-12-08 15:30:57.962664</div><div class="cell" style="right:40px;letter-spacing:0.75px">8074</div></div><div class="row" style="left:0;top:720px;background:#ffffff"><div class="cell" style="right:1031.5px;letter-spacing:0.35px">132</div><div class="cell" style="left:45px;letter-spacing:0.29px">Love that jumper! <span class="em" style="margin-left:1px;margin-right:1px"><svg viewBox="0 0 14 14"><path d="M1.5 12.5C1.5 8 4.5 5 8.5 5 8.5 9.5 5.5 12.5 1.5 12.5Z" fill="#c46a23"/><path d="M6 11C8.5 8 11.5 7.5 13.5 8.5 12 12 9 13 6 11Z" fill="#a8501b"/><path d="M6.5 1.5C9 2.5 10 5 9 7.5 6.5 6.5 5.5 4 6.5 1.5Z" fill="#d98a3a"/></svg></span></div><div class="cell" style="right:545.5px;letter-spacing:0.75px">8995</div><div class="cell" style="left:531px;letter-spacing:0.75px">4118</div><div class="cell" style="left:605.5px;letter-spacing:0.8px">2015-10-24 18:15:03.692</div><div class="cell" style="left:792px;letter-spacing:0.8px">2015-12-08 15:30:57.99569</div><div class="cell" style="right:40px;letter-spacing:0.75px">12884</div></div><div class="r" style="left:41px;top:0;width:1px;height:735px;background:#ececec"></div><div class="r" style="left:438px;top:0;width:1px;height:735px;background:#ececec"></div><div class="r" style="left:527px;top:0;width:1px;height:735px;background:#ececec"></div><div class="r" style="left:601px;top:0;width:1px;height:735px;background:#ececec"></div><div class="r" style="left:788px;top:0;width:1px;height:735px;background:#ececec"></div><div class="r" style="left:974px;top:0;width:1px;height:735px;background:#ececec"></div><div class="r" style="left:1032px;top:0;width:1px;height:735px;background:#ececec"></div></div><div class="r" style="left:424px;top:937px;width:1069px;height:36px;background:#efefef;"></div><div class="r" style="left:424px;top:937px;width:1069px;height:1px;background:#dedede;"></div><div class="r" style="left:435px;top:944px;width:124px;height:21px;background:#dcdcdc;border-radius:6px"></div><div class="btn" style="left:436px;top:945px;width:61px;height:19px;border-radius:5px"></div><div class="t" style="top:949.42px;font-size:12.5px;color:#222;letter-spacing:0.2px;left:66.50px;width:800px;text-align:center;">Data</div><div class="t" style="top:949.42px;font-size:12.5px;color:#333;letter-spacing:0.1px;left:128.50px;width:800px;text-align:center;">Structure</div><div class="btn" style="left:570px;top:945px;width:76px;height:20px;border-radius:5px"></div><svg class="r" style="left:577px;top:948px;" width="14" height="14" viewBox="0 0 14 14"><path d="M7 1.5v11M1.5 7h11" stroke="#333" stroke-width="1.2"/></svg><div class="t" style="top:948.50px;font-size:13px;color:#222;letter-spacing:0.2px;left:215.50px;width:800px;text-align:center;">Row</div><div class="t" style="top:949.00px;font-size:13px;color:#7a7a7a;letter-spacing:0.12px;left:880.00px;">1-300 of 859 rows</div><div class="btn" style="left:1213px;top:945px;width:76px;height:20px;border-radius:5px"></div><div class="t" style="top:948.92px;font-size:12.5px;color:#222;letter-spacing:0.2px;left:851.00px;width:800px;text-align:center;">Columns</div><div class="r" style="left:1299px;top:945px;width:76px;height:20px;border-radius:5px;background:#3b82f6;box-shadow:0 0.5px 1px rgba(0,0,0,0.2)"></div><div class="t" style="top:948.92px;font-size:12.5px;color:#ffffff;letter-spacing:0.2px;left:937.00px;width:800px;text-align:center;">Filters</div><div class="btn" style="left:1385px;top:945px;width:98px;height:20px;border-radius:5px"></div><svg class="r" style="left:1393px;top:949px;" width="12" height="12" viewBox="0 0 12 12"><path d="M8 1.5L3.5 6 8 10.5" fill="none" stroke="#b0b0b0" stroke-width="1.3"/></svg><div class="r" style="left:1418px;top:949px;width:1px;height:12px;background:#e3e3e3;"></div><svg class="r" style="left:1426px;top:947px;" width="16" height="16" viewBox="0 0 16 16"><g stroke="#2a2a2a" stroke-width="2.6" stroke-linecap="round"><path d="M8 8L13.50 8.00"/><path d="M8 8L11.89 11.89"/><path d="M8 8L8.00 13.50"/><path d="M8 8L4.11 11.89"/><path d="M8 8L2.50 8.00"/><path d="M8 8L4.11 4.11"/><path d="M8 8L8.00 2.50"/><path d="M8 8L11.89 4.11"/></g><circle cx="8" cy="8" r="4.9" fill="#2a2a2a"/><circle cx="8" cy="8" r="2" fill="#ffffff"/></svg><div class="r" style="left:1450px;top:949px;width:1px;height:12px;background:#e3e3e3;"></div><svg class="r" style="left:1461px;top:949px;" width="12" height="12" viewBox="0 0 12 12"><path d="M4 1.5L8.5 6 4 10.5" fill="none" stroke="#333" stroke-width="1.3"/></svg></div></body></html>
